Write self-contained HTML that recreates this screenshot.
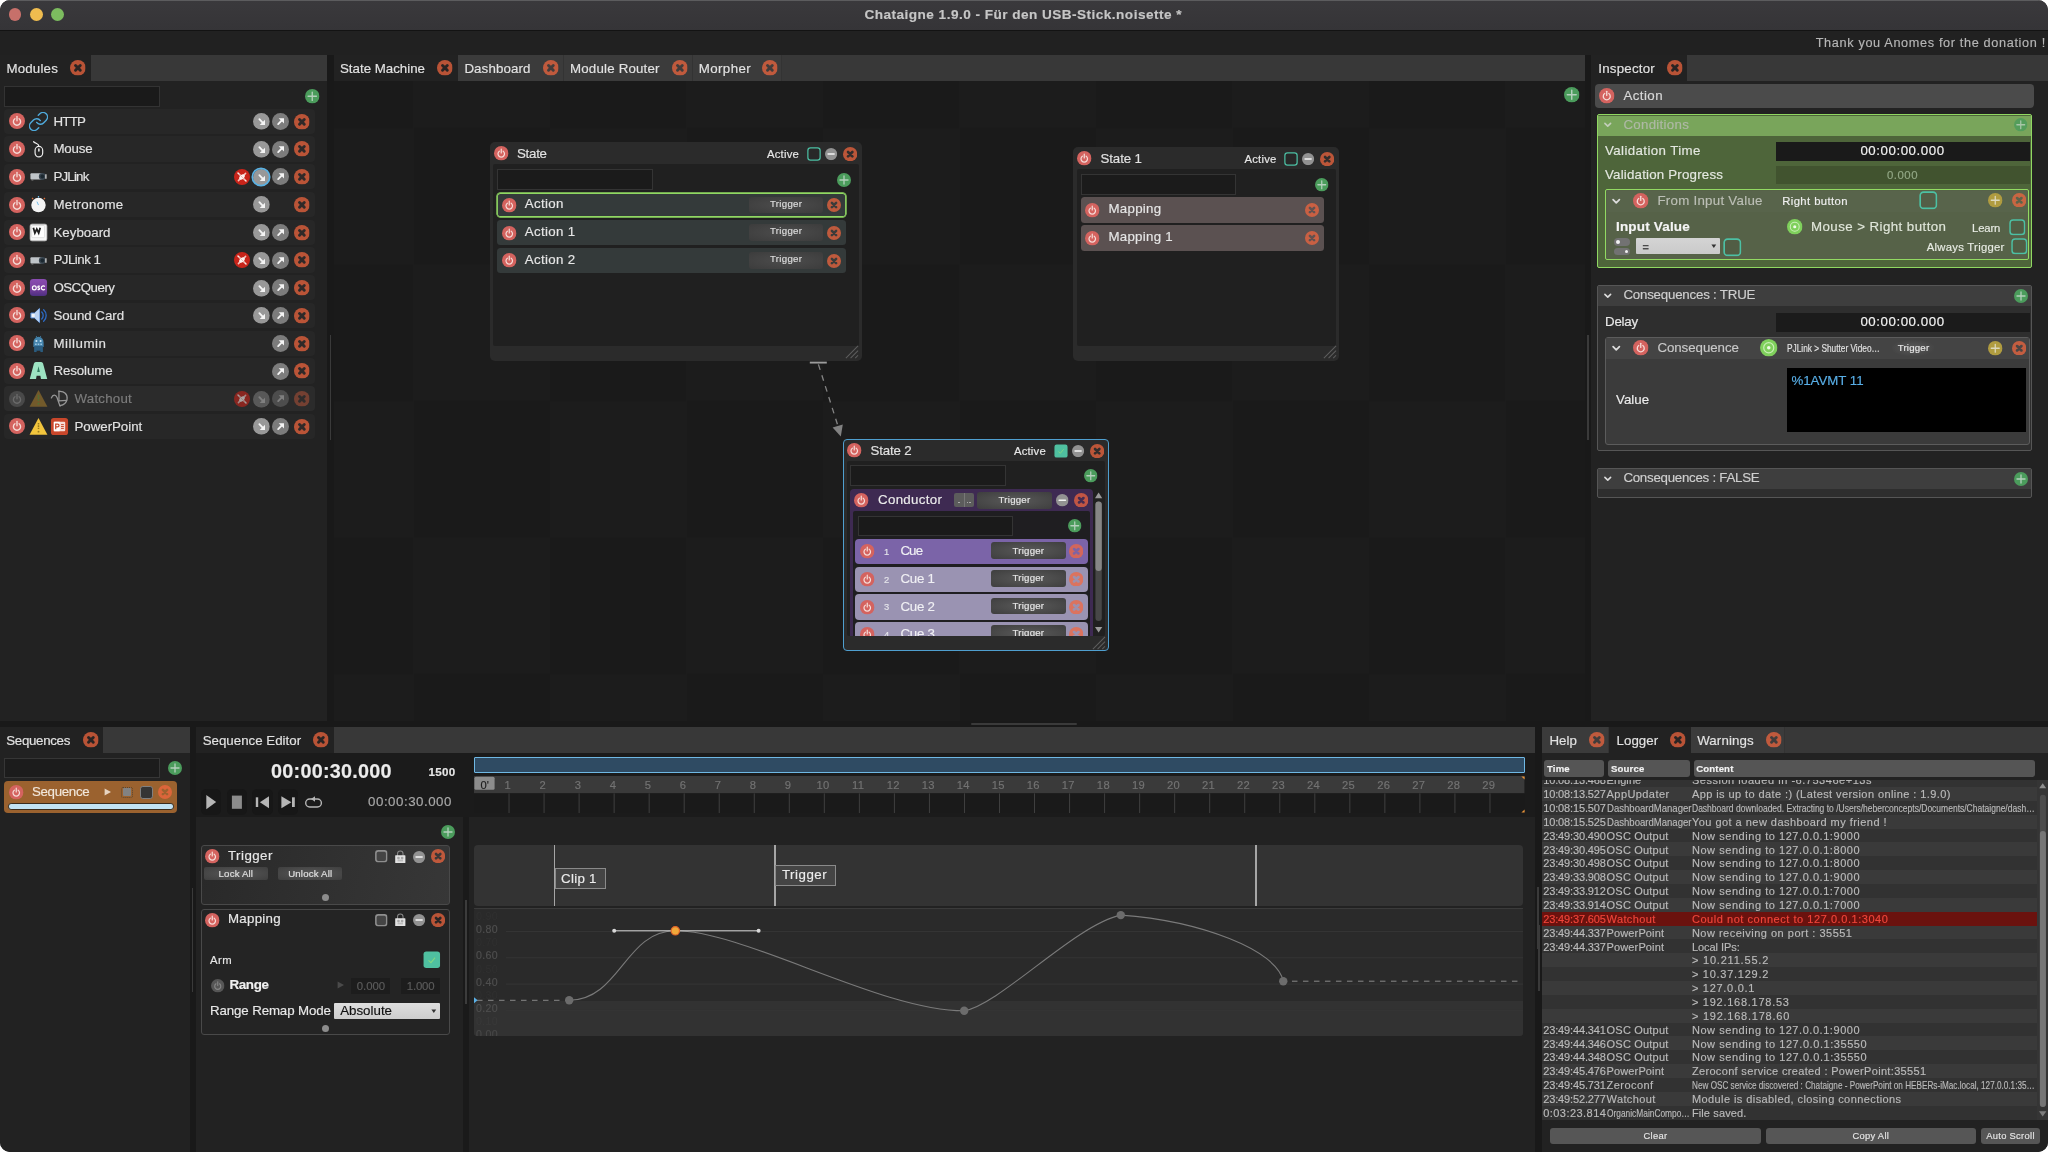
<!DOCTYPE html><html lang="en"><head><meta charset="utf-8"><title>Chataigne 1.9.0</title><style>
html,body{margin:0;padding:0;background:#fff;}
body{width:2048px;height:1152px;overflow:hidden;font-family:"Liberation Sans",sans-serif;}
#root{position:absolute;left:0;top:0;width:2048px;height:1152px;border-radius:10px;overflow:hidden;background:#191919;will-change:transform;}
#root div,#root svg.i{position:absolute;}
.t{white-space:nowrap;-webkit-text-stroke:0.16px;}
svg.i{overflow:visible;}
</style></head><body>
<svg width="0" height="0" style="position:absolute">
<defs>
<mask id="xmask" maskUnits="userSpaceOnUse" x="0" y="0" width="16" height="16">
  <rect x="0" y="0" width="16" height="16" fill="#fff"/>
  <path d="M5.6 5.6 L10.4 10.4 M10.4 5.6 L5.6 10.4" stroke="#000" stroke-opacity=".94" stroke-width="3" stroke-linecap="round"/>
</mask>
<symbol id="pw" viewBox="0 0 16 16">
  <circle cx="8" cy="8" r="8" fill="#d4635f"/>
  <path d="M5.9 5.7 A3.6 3.6 0 1 0 10.1 5.7" fill="none" stroke="#f6dcd8" stroke-width="1.35" stroke-linecap="round"/>
  <path d="M8 3.4 V7.7" stroke="#f6dcd8" stroke-width="1.35" stroke-linecap="round"/>
</symbol>
<symbol id="pwg" viewBox="0 0 16 16">
  <circle cx="8" cy="8" r="8" fill="#565656"/>
  <path d="M5.9 5.7 A3.6 3.6 0 1 0 10.1 5.7" fill="none" stroke="#868686" stroke-width="1.35" stroke-linecap="round"/>
  <path d="M8 3.4 V7.7" stroke="#868686" stroke-width="1.35" stroke-linecap="round"/>
</symbol>
<symbol id="x" viewBox="0 0 16 16">
  <circle cx="8" cy="8" r="8" fill="#f4663e" fill-opacity=".72" mask="url(#xmask)"/>
</symbol>
<symbol id="xl" viewBox="0 0 16 16">
  <circle cx="8" cy="8" r="8" fill="#f4663e" fill-opacity=".72" mask="url(#xmask)"/>
</symbol>
<symbol id="add" viewBox="0 0 16 16">
  <circle cx="8" cy="8" r="8" fill="#4b9c5c"/>
  <path d="M8 3.4 V12.6 M3.4 8 H12.6" stroke="#b4cfbc" stroke-width="1.5" stroke-linecap="round"/>
</symbol>
<symbol id="addy" viewBox="0 0 16 16">
  <circle cx="8" cy="8" r="8" fill="#b09c40"/>
  <path d="M8 3.6 V12.4 M3.6 8 H12.4" stroke="#ddd9bd" stroke-width="1.4" stroke-linecap="round"/>
</symbol>
<symbol id="ain" viewBox="0 0 16 16">
  <circle cx="8" cy="8" r="8" fill="#989898"/>
  <g transform="translate(8.3 8.3) scale(.8) translate(-8 -8)">
  <path d="M5.2 4.9 L9.4 9.3" stroke="#f4f4f4" stroke-width="2.2" stroke-linecap="round"/>
  <path d="M11.9 5.6 V11.9 H5.6 Z" fill="#f4f4f4"/></g>
</symbol>
<symbol id="aout" viewBox="0 0 16 16">
  <circle cx="8" cy="8" r="8" fill="#7c7c7c"/>
  <g transform="translate(8.2 7.9) scale(.8) translate(-8 -8)">
  <path d="M5 11.2 L9.3 6.8" stroke="#f4f4f4" stroke-width="2.2" stroke-linecap="round"/>
  <path d="M5.6 4.2 H11.9 V10.5 Z" fill="#f4f4f4"/></g>
</symbol>
<symbol id="min" viewBox="0 0 16 16">
  <circle cx="8" cy="8" r="8" fill="#929292"/>
  <path d="M4 8 H12" stroke="#f4f4f4" stroke-width="2" stroke-linecap="round"/>
</symbol>
<symbol id="conn" viewBox="0 0 16 16">
  <circle cx="8" cy="8" r="8" fill="#c8241a"/>
  <path d="M4 4 L12 12" stroke="#fbe9e6" stroke-width="1.5" stroke-linecap="round"/>
  <path d="M11.6 4.4 L9.6 6.4 M6.4 9.6 L4.4 11.6" stroke="#f3c4be" stroke-width="1.5" stroke-linecap="round"/>
  <ellipse cx="8" cy="8" rx="3.3" ry="2" transform="rotate(-45 8 8)" fill="#fdf1ef"/>
  <path d="M5.2 5.2 L10.8 10.8" stroke="#e8a39b" stroke-width=".7"/>
</symbol>
<symbol id="tgt" viewBox="0 0 16 16">
  <circle cx="8" cy="8" r="8" fill="#7fd05c"/>
  <circle cx="8" cy="8" r="4.6" fill="none" stroke="#c9eeb6" stroke-width="1.1"/>
  <circle cx="8" cy="8" r="1.6" fill="#eefae6"/>
</symbol>
<symbol id="cb" viewBox="0 0 16 16">
  <rect x="1" y="1" width="14" height="14" rx="3" fill="#000" fill-opacity=".05" stroke="#4cc0a4" stroke-width="1.4"/>
</symbol>
<symbol id="cbw" viewBox="0 0 16 16">
  <rect x="1.1" y="1.1" width="13.8" height="13.8" rx="3" fill="#444" stroke="#8e8e8e" stroke-width="2"/>
</symbol>
<symbol id="cbon" viewBox="0 0 16 16">
  <rect x="0.5" y="0.5" width="15" height="15" rx="2.5" fill="#4fc0a0"/>
  <path d="M5 8.6 L7.2 10.6 L11 6" fill="none" stroke="#8fdc78" stroke-width="1" opacity=".8"/>
</symbol>
<symbol id="lock" viewBox="0 0 16 16">
  <path d="M5 7.6 V5.2 A3 3 0 0 1 11 5.2 V7.6" fill="none" stroke="#8a8a8a" stroke-width="1.1"/>
  <rect x="2.4" y="6.8" width="11.2" height="8.6" rx=".6" fill="#e2e2e2"/>
  <circle cx="6" cy="10" r="1.5" fill="#a8a8a8"/><circle cx="10" cy="10" r="1.5" fill="#a8a8a8"/>
  <rect x="5" y="11.6" width="6" height="2" fill="#bcbcbc"/>
</symbol>
<symbol id="chev" viewBox="0 0 16 16">
  <path d="M3.2 5.6 L8 10.4 L12.8 5.6" fill="none" stroke="#dcdcdc" stroke-width="2.7" stroke-linecap="round" stroke-linejoin="round"/>
</symbol>
<symbol id="grip" viewBox="0 0 16 16">
  <path d="M15 2 L2 15 M15 7 L7 15 M15 12 L12 15" stroke="#5e5e5e" stroke-width="1.1"/>
</symbol>
<!-- module icons (20x20) -->
<symbol id="m-lnk" viewBox="1.5 1.5 21 21">
  <g fill="none" stroke="#4fa9da" stroke-width="1.6" stroke-linecap="round" stroke-linejoin="round">
  <path d="M10 13a5 5 0 0 0 7.54.54l3-3a5 5 0 0 0-7.07-7.07l-1.72 1.71"/>
  <path d="M14 11a5 5 0 0 0-7.54-.54l-3 3a5 5 0 0 0 7.07 7.07l1.71-1.71"/>
  </g>
</symbol>
<symbol id="m-mouse" viewBox="0 0 20 20">
  <g fill="none" stroke="#ececec" stroke-width="1.25" stroke-linecap="round">
  <rect x="6.4" y="6.8" width="8" height="11" rx="4"/>
  <path d="M10.4 6.8 C10.6 3.4 7.4 4.4 4.8 1.8"/>
  <path d="M10.4 9.4 V11.6" stroke-width="1.6"/>
  </g>
</symbol>
<symbol id="m-pj" viewBox="0 0 20 20">
  <rect x="1.5" y="6.6" width="13" height="6.6" rx="1" fill="#bfc4c8"/>
  <rect x="2.6" y="13.2" width="2" height="1" fill="#888"/>
  <circle cx="14" cy="10" r="3.6" fill="#3a4650"/>
  <circle cx="14" cy="10" r="2" fill="#1c2830"/>
  <path d="M17.8 7.6 V12.4" stroke="#eee" stroke-width="1.2"/>
</symbol>
<symbol id="m-metro" viewBox="0 0 20 20">
  <circle cx="10" cy="10.6" r="7.6" fill="#f4f4f4"/>
  <path d="M10 10.6 L8.4 7" stroke="#6ab8e8" stroke-width="1"/>
  <path d="M3.2 3.2 L4.4 4.4 M16.8 3.2 L15.6 4.4" stroke="#e0703a" stroke-width="1.3"/>
  <path d="M10 1 V2.6" stroke="#6ab8e8" stroke-width="1.3"/>
</symbol>
<symbol id="m-kb" viewBox="0 0 20 20">
  <rect x="1.2" y="1.2" width="17.6" height="17.6" rx="2" fill="#f6f6f6" stroke="#c8c8c8" stroke-width=".8"/>
  <rect x="2.8" y="2.6" width="13.6" height="12.8" rx="1.2" fill="#fdfdfd" stroke="#cfcfcf" stroke-width=".6"/>
  <path d="M4.6 5 L6.2 10.6 L8.2 6.4 L10.2 10.6 L11.8 5" fill="none" stroke="#1e1e1e" stroke-width="1.9" stroke-linejoin="miter"/>
</symbol>
<symbol id="m-osc" viewBox="0 0 20 20">
  <linearGradient id="oscg" x1="0" y1="0" x2="0" y2="1"><stop offset="0" stop-color="#8a4cb2"/><stop offset=".55" stop-color="#7a3f9e"/><stop offset="1" stop-color="#4d2f80"/></linearGradient>
  <rect x="1" y="1" width="18" height="18" rx="3.5" fill="url(#oscg)"/>
  <g fill="none" stroke="#fff" stroke-width="1.3">
   <circle cx="5.6" cy="10.4" r="2"/>
   <path d="M11.4 8.8 C9 7.8 8.8 10 10.2 10.4 C11.8 10.9 11.4 12.8 9 12"/>
   <path d="M16.6 9.2 A2 2 0 1 0 16.6 11.6"/>
  </g>
</symbol>
<symbol id="m-snd" viewBox="0 0 20 20">
  <path d="M2 7.4 H6 L11 2.6 V17.4 L6 12.6 H2 Z" fill="#f2f4f8" stroke="#4a86d8" stroke-width="1"/>
  <path d="M6 7.4 L11 2.6 V17.4 L6 12.6 Z" fill="#bcd4f4"/>
  <path d="M13.4 6.4 A5 5 0 0 1 13.4 13.6 M15.4 4 A8 8 0 0 1 15.4 16" fill="none" stroke="#2d6ac4" stroke-width="1.4" stroke-linecap="round"/>
</symbol>
<symbol id="m-mil" viewBox="0 0 20 20">
  <path d="M4.6 9 A5.4 6 0 0 1 15.4 9 V13.6 H4.6 Z" fill="#4484ad"/>
  <path d="M7 3.6 L7.6 1.8 L8.6 3.2 Z M13 3.6 L12.4 1.8 L11.4 3.2 Z" fill="#4484ad"/>
  <rect x="5.4" y="12.6" width="9.2" height="5" fill="#2b5d80"/>
  <rect x="5.4" y="17" width="2.6" height="2" fill="#2b5d80"/><rect x="12" y="17" width="2.6" height="2" fill="#2b5d80"/>
  <circle cx="7.8" cy="7.4" r="1.1" fill="#cfe6f4"/><circle cx="12.2" cy="7.4" r="1.1" fill="#cfe6f4"/>
  <rect x="6.4" y="10" width="1.6" height="1.6" fill="#9fc8e2"/><rect x="9.2" y="10" width="1.6" height="1.6" fill="#9fc8e2"/><rect x="12" y="10" width="1.6" height="1.6" fill="#9fc8e2"/>
</symbol>
<symbol id="m-res" viewBox="0 0 20 20">
  <path d="M0.8 19 L5.2 2.6 Q5.7 1 7.2 1 H12.8 Q14.3 1 14.8 2.6 L19.2 19 H12.6 L12 15.6 H8 L7.4 19 Z" fill="#9de3c2"/>
  <path d="M8.6 11.6 L10 5.6 L11.4 11.6 Z" fill="#2f7a5e"/>
</symbol>
<symbol id="m-wo" viewBox="0 0 20 20">
  <g fill="none" stroke="#bbb" stroke-width="1.3" stroke-linecap="round">
   <path d="M1.4 9.4 C3 5.4 6 5.4 7.4 9 C8.6 12.6 9.6 15.6 10.6 18"/>
   <path d="M9.4 2 V12.4"/>
   <path d="M9.4 2.6 C15 2 18.6 5.6 18 10.6 C17.4 14.6 14 16.8 10.4 17.6"/>
   <path d="M9.4 12.4 L17.6 12"/>
  </g>
</symbol>
<symbol id="m-warn" viewBox="0 0 20 20">
  <path d="M10 1 L19.4 18.6 H0.6 Z" fill="#f2c53d"/>
  <path d="M10 6.4 V12.6" stroke="#9a7d1c" stroke-width="1.6" stroke-dasharray="1.6 .8"/>
  <circle cx="10" cy="15.4" r="1" fill="#9a7d1c"/>
</symbol>
<symbol id="m-warnd" viewBox="0 0 20 20">
  <path d="M10 1 L19.4 18.6 H0.6 Z" fill="#8a6a2c"/>
  <path d="M10 6.4 V12.6" stroke="#5a8a3a" stroke-width="1.6" stroke-dasharray="1.6 .8"/>
  <circle cx="10" cy="15.4" r="1" fill="#5a8a3a"/>
</symbol>
<symbol id="m-ppt" viewBox="0 0 20 20">
  <rect x="1" y="1" width="18" height="18" rx="3" fill="#c9472b"/>
  <rect x="4" y="5" width="12" height="10" rx="1" fill="#f6ddd6"/>
  <rect x="4" y="5" width="6.2" height="10" fill="#fff"/>
  <path d="M6 13 V7.4 H8 A1.5 1.5 0 0 1 8 10.4 H6" fill="none" stroke="#c9472b" stroke-width="1.3"/>
  <path d="M11.6 8 H14.6 M11.6 10 H14.6 M11.6 12 H14.6" stroke="#c9472b" stroke-width="1"/>
</symbol>
</defs>
</svg>
<div id="root"><div style="left:0.00px;top:0.00px;width:2048.00px;height:31.20px;background:linear-gradient(#3a393c,#353437);border-top:1px solid #5c5c5e;border-bottom:1.3px solid #131313;box-sizing:border-box;"></div><div style="left:8.50px;top:8.40px;width:12.80px;height:12.80px;background:#c7706a;border-radius:7px;"></div><div style="left:29.90px;top:8.40px;width:12.80px;height:12.80px;background:#efbc4f;border-radius:7px;"></div><div style="left:51.20px;top:8.40px;width:12.80px;height:12.80px;background:#7cbc5f;border-radius:7px;"></div><div class="t" style="top:5.10px;height:20px;line-height:20px;font-size:13.6px;color:#c6c6c6;font-weight:700;letter-spacing:0.464px;left:723.23px;width:600.00px;text-align:center;">Chataigne 1.9.0 - Für den USB-Stick.noisette *</div><div style="left:0.00px;top:31.20px;width:2048.00px;height:24.00px;background:#212121;"></div><div class="t" style="top:32.50px;height:20px;line-height:20px;font-size:12.7px;color:#b6b6b6;letter-spacing:0.651px;left:1545.85px;width:500.00px;text-align:right;">Thank you Anomes for the donation !</div>
<div style="left:0.00px;top:55.50px;width:327.00px;height:665.00px;background:#222222;"></div><div style="left:0.00px;top:54.90px;width:327.00px;height:26.10px;background:#383838;"></div><div style="left:0.00px;top:54.90px;width:91.00px;height:26.10px;background:#222222;"></div><div class="t" style="top:58.70px;height:20px;line-height:20px;font-size:13.3px;color:#e2e2e2;letter-spacing:0.189px;left:6.40px;">Modules</div><svg class="i" style="left:69.60px;top:59.85px;width:15.8px;height:15.8px;"><use href="#x"/></svg><div style="left:4.00px;top:85.50px;width:155.50px;height:21.00px;background:#1a1a1a;border:1px solid #333;box-sizing:border-box;"></div><svg class="i" style="left:304.95px;top:88.95px;width:14.5px;height:14.5px;"><use href="#add"/></svg><div style="left:4.00px;top:108.70px;width:310.50px;height:25.20px;background:#272727;border-radius:4px;"></div><svg class="i" style="left:9.00px;top:113.30px;width:16px;height:16px;"><use href="#pw"/></svg><svg class="i" style="left:28.50px;top:111.80px;width:19px;height:19px;"><use href="#m-lnk"/></svg><div class="t" style="top:111.70px;height:20px;line-height:20px;font-size:13.3px;color:#e2e2e2;letter-spacing:-0.74px;left:53.40px;">HTTP</div><svg class="i" style="left:252.70px;top:113.10px;width:16.8px;height:16.8px;"><use href="#ain"/></svg><svg class="i" style="left:272.00px;top:113.00px;width:17px;height:17px;"><use href="#aout"/></svg><svg class="i" style="left:294.00px;top:113.70px;width:15.8px;height:15.8px;"><use href="#x"/></svg><div style="left:4.00px;top:136.44px;width:310.50px;height:25.20px;background:#272727;border-radius:4px;"></div><svg class="i" style="left:9.00px;top:141.04px;width:16px;height:16px;"><use href="#pw"/></svg><svg class="i" style="left:28.50px;top:139.54px;width:19px;height:19px;"><use href="#m-mouse"/></svg><div class="t" style="top:139.44px;height:20px;line-height:20px;font-size:13.3px;color:#e2e2e2;letter-spacing:-0.155px;left:53.40px;">Mouse</div><svg class="i" style="left:252.70px;top:140.84px;width:16.8px;height:16.8px;"><use href="#ain"/></svg><svg class="i" style="left:272.00px;top:140.74px;width:17px;height:17px;"><use href="#aout"/></svg><svg class="i" style="left:294.00px;top:141.44px;width:15.8px;height:15.8px;"><use href="#x"/></svg><div style="left:4.00px;top:164.18px;width:310.50px;height:25.20px;background:#272727;border-radius:4px;"></div><svg class="i" style="left:9.00px;top:168.78px;width:16px;height:16px;"><use href="#pw"/></svg><svg class="i" style="left:28.50px;top:167.28px;width:19px;height:19px;"><use href="#m-pj"/></svg><div class="t" style="top:167.18px;height:20px;line-height:20px;font-size:13.3px;color:#e2e2e2;letter-spacing:-0.784px;left:53.40px;">PJLink</div><svg class="i" style="left:233.60px;top:168.78px;width:16px;height:16px;"><use href="#conn"/></svg><svg class="i" style="left:252.70px;top:168.58px;width:16.8px;height:16.8px;"><use href="#ain"/></svg><svg class="i" style="left:272.00px;top:168.48px;width:17px;height:17px;"><use href="#aout"/></svg><svg class="i" style="left:294.00px;top:169.18px;width:15.8px;height:15.8px;"><use href="#x"/></svg><div style="left:4.00px;top:191.92px;width:310.50px;height:25.20px;background:#272727;border-radius:4px;"></div><svg class="i" style="left:9.00px;top:196.52px;width:16px;height:16px;"><use href="#pw"/></svg><svg class="i" style="left:28.50px;top:195.02px;width:19px;height:19px;"><use href="#m-metro"/></svg><div class="t" style="top:194.92px;height:20px;line-height:20px;font-size:13.3px;color:#e2e2e2;letter-spacing:0.317px;left:53.40px;">Metronome</div><svg class="i" style="left:252.70px;top:196.32px;width:16.8px;height:16.8px;"><use href="#ain"/></svg><svg class="i" style="left:294.00px;top:196.92px;width:15.8px;height:15.8px;"><use href="#x"/></svg><div style="left:4.00px;top:219.66px;width:310.50px;height:25.20px;background:#272727;border-radius:4px;"></div><svg class="i" style="left:9.00px;top:224.26px;width:16px;height:16px;"><use href="#pw"/></svg><svg class="i" style="left:28.50px;top:222.76px;width:19px;height:19px;"><use href="#m-kb"/></svg><div class="t" style="top:222.66px;height:20px;line-height:20px;font-size:13.3px;color:#e2e2e2;letter-spacing:0.025px;left:53.40px;">Keyboard</div><svg class="i" style="left:252.70px;top:224.06px;width:16.8px;height:16.8px;"><use href="#ain"/></svg><svg class="i" style="left:272.00px;top:223.96px;width:17px;height:17px;"><use href="#aout"/></svg><svg class="i" style="left:294.00px;top:224.66px;width:15.8px;height:15.8px;"><use href="#x"/></svg><div style="left:4.00px;top:247.40px;width:310.50px;height:25.20px;background:#272727;border-radius:4px;"></div><svg class="i" style="left:9.00px;top:252.00px;width:16px;height:16px;"><use href="#pw"/></svg><svg class="i" style="left:28.50px;top:250.50px;width:19px;height:19px;"><use href="#m-pj"/></svg><div class="t" style="top:250.40px;height:20px;line-height:20px;font-size:13.3px;color:#e2e2e2;letter-spacing:-0.5px;left:53.40px;">PJLink 1</div><svg class="i" style="left:233.60px;top:252.00px;width:16px;height:16px;"><use href="#conn"/></svg><svg class="i" style="left:252.70px;top:251.80px;width:16.8px;height:16.8px;"><use href="#ain"/></svg><svg class="i" style="left:272.00px;top:251.70px;width:17px;height:17px;"><use href="#aout"/></svg><svg class="i" style="left:294.00px;top:252.40px;width:15.8px;height:15.8px;"><use href="#x"/></svg><div style="left:4.00px;top:275.14px;width:310.50px;height:25.20px;background:#272727;border-radius:4px;"></div><svg class="i" style="left:9.00px;top:279.74px;width:16px;height:16px;"><use href="#pw"/></svg><svg class="i" style="left:28.50px;top:278.24px;width:19px;height:19px;"><use href="#m-osc"/></svg><div class="t" style="top:278.14px;height:20px;line-height:20px;font-size:13.3px;color:#e2e2e2;letter-spacing:-0.49px;left:53.40px;">OSCQuery</div><svg class="i" style="left:252.70px;top:279.54px;width:16.8px;height:16.8px;"><use href="#ain"/></svg><svg class="i" style="left:272.00px;top:279.44px;width:17px;height:17px;"><use href="#aout"/></svg><svg class="i" style="left:294.00px;top:280.14px;width:15.8px;height:15.8px;"><use href="#x"/></svg><div style="left:4.00px;top:302.88px;width:310.50px;height:25.20px;background:#272727;border-radius:4px;"></div><svg class="i" style="left:9.00px;top:307.48px;width:16px;height:16px;"><use href="#pw"/></svg><svg class="i" style="left:28.50px;top:305.98px;width:19px;height:19px;"><use href="#m-snd"/></svg><div class="t" style="top:305.88px;height:20px;line-height:20px;font-size:13.3px;color:#e2e2e2;letter-spacing:-0.03px;left:53.40px;">Sound Card</div><svg class="i" style="left:252.70px;top:307.28px;width:16.8px;height:16.8px;"><use href="#ain"/></svg><svg class="i" style="left:272.00px;top:307.18px;width:17px;height:17px;"><use href="#aout"/></svg><svg class="i" style="left:294.00px;top:307.88px;width:15.8px;height:15.8px;"><use href="#x"/></svg><div style="left:4.00px;top:330.62px;width:310.50px;height:25.20px;background:#272727;border-radius:4px;"></div><svg class="i" style="left:9.00px;top:335.22px;width:16px;height:16px;"><use href="#pw"/></svg><svg class="i" style="left:28.50px;top:333.72px;width:19px;height:19px;"><use href="#m-mil"/></svg><div class="t" style="top:333.62px;height:20px;line-height:20px;font-size:13.3px;color:#e2e2e2;letter-spacing:0.533px;left:53.40px;">Millumin</div><svg class="i" style="left:272.00px;top:334.92px;width:17px;height:17px;"><use href="#aout"/></svg><svg class="i" style="left:294.00px;top:335.62px;width:15.8px;height:15.8px;"><use href="#x"/></svg><div style="left:4.00px;top:358.36px;width:310.50px;height:25.20px;background:#272727;border-radius:4px;"></div><svg class="i" style="left:9.00px;top:362.96px;width:16px;height:16px;"><use href="#pw"/></svg><svg class="i" style="left:28.50px;top:361.46px;width:19px;height:19px;"><use href="#m-res"/></svg><div class="t" style="top:361.36px;height:20px;line-height:20px;font-size:13.3px;color:#e2e2e2;letter-spacing:-0.096px;left:53.40px;">Resolume</div><svg class="i" style="left:272.00px;top:362.66px;width:17px;height:17px;"><use href="#aout"/></svg><svg class="i" style="left:294.00px;top:363.36px;width:15.8px;height:15.8px;"><use href="#x"/></svg><div style="left:4.00px;top:386.10px;width:310.50px;height:25.20px;background:#2b2b2b;border-radius:4px;"></div><svg class="i" style="left:9.00px;top:390.70px;width:16px;height:16px;opacity:.7;"><use href="#pwg"/></svg><svg class="i" style="left:28.50px;top:389.20px;width:19px;height:19px;opacity:.75;"><use href="#m-warnd"/></svg><svg class="i" style="left:50.00px;top:389.20px;width:19px;height:19px;opacity:.75;"><use href="#m-wo"/></svg><div class="t" style="top:389.10px;height:20px;line-height:20px;font-size:13.3px;color:#7c7c7c;letter-spacing:0.23px;left:74.50px;">Watchout</div><svg class="i" style="left:233.60px;top:390.70px;width:16px;height:16px;opacity:.6;"><use href="#conn"/></svg><svg class="i" style="left:252.70px;top:390.50px;width:16.8px;height:16.8px;opacity:.42;"><use href="#ain"/></svg><svg class="i" style="left:272.00px;top:390.40px;width:17px;height:17px;opacity:.42;"><use href="#aout"/></svg><svg class="i" style="left:294.00px;top:391.10px;width:15.8px;height:15.8px;opacity:.5;"><use href="#x"/></svg><div style="left:4.00px;top:413.84px;width:310.50px;height:25.20px;background:#272727;border-radius:4px;"></div><svg class="i" style="left:9.00px;top:418.44px;width:16px;height:16px;"><use href="#pw"/></svg><svg class="i" style="left:28.50px;top:416.94px;width:19px;height:19px;"><use href="#m-warn"/></svg><svg class="i" style="left:50.00px;top:416.94px;width:19px;height:19px;"><use href="#m-ppt"/></svg><div class="t" style="top:416.84px;height:20px;line-height:20px;font-size:13.3px;color:#e2e2e2;letter-spacing:-0.033px;left:74.50px;">PowerPoint</div><svg class="i" style="left:252.70px;top:418.24px;width:16.8px;height:16.8px;"><use href="#ain"/></svg><svg class="i" style="left:272.00px;top:418.14px;width:17px;height:17px;"><use href="#aout"/></svg><svg class="i" style="left:294.00px;top:418.84px;width:15.8px;height:15.8px;"><use href="#x"/></svg><svg class="i" style="left:250.30px;top:166.08px;width:22.00px;height:22.00px;" viewBox="0 0 22.00 22.00"><circle cx="11" cy="11" r="8.7" fill="none" stroke="#5ab2e4" stroke-width="1.7"/></svg><div style="left:329.50px;top:335.00px;width:1.50px;height:105.00px;background:#3a3a3a;"></div><div style="left:971.00px;top:723.40px;width:106.00px;height:1.60px;background:#3a3a3a;border-radius:1px;"></div>
<div style="left:333.50px;top:81.00px;width:1251.50px;height:639.50px;background-color:#1a1a1a;background-image:conic-gradient(#1c1c1c 25%,#1a1a1a 0 50%,#1c1c1c 0 75%,#1a1a1a 0);background-size:273px 273px;background-position:488.8px 183.5px;"></div><div style="left:333.50px;top:54.90px;width:1251.50px;height:26.10px;background:#383838;"></div><div style="left:333.50px;top:54.90px;width:124.50px;height:26.10px;background:#222222;"></div><div class="t" style="top:58.70px;height:20px;line-height:20px;font-size:13.3px;color:#e2e2e2;letter-spacing:-0.001px;left:340.00px;">State Machine</div><svg class="i" style="left:437.10px;top:59.85px;width:15.8px;height:15.8px;"><use href="#x"/></svg><div style="left:458.00px;top:54.90px;width:105.50px;height:26.10px;background:#3b3b3b;box-shadow:inset -1px 0 0 #333;"></div><div class="t" style="top:58.70px;height:20px;line-height:20px;font-size:13.3px;color:#e2e2e2;letter-spacing:0.117px;left:464.40px;">Dashboard</div><svg class="i" style="left:542.60px;top:59.85px;width:15.8px;height:15.8px;"><use href="#x"/></svg><div style="left:563.50px;top:54.90px;width:129.00px;height:26.10px;background:#3b3b3b;box-shadow:inset -1px 0 0 #333;"></div><div class="t" style="top:58.70px;height:20px;line-height:20px;font-size:13.3px;color:#e2e2e2;letter-spacing:0.19px;left:570.00px;">Module Router</div><svg class="i" style="left:671.60px;top:59.85px;width:15.8px;height:15.8px;"><use href="#x"/></svg><div style="left:692.50px;top:54.90px;width:89.00px;height:26.10px;background:#3b3b3b;box-shadow:inset -1px 0 0 #333;"></div><div class="t" style="top:58.70px;height:20px;line-height:20px;font-size:13.3px;color:#e2e2e2;letter-spacing:0.414px;left:698.70px;">Morpher</div><svg class="i" style="left:762.10px;top:59.85px;width:15.8px;height:15.8px;"><use href="#x"/></svg><svg class="i" style="left:1564.25px;top:86.75px;width:15.5px;height:15.5px;"><use href="#add"/></svg><div style="left:489.80px;top:142.00px;width:372.20px;height:218.90px;background:#2b2b2b;border-radius:5px;"></div><div style="left:493.20px;top:164.40px;width:365.40px;height:182.00px;background:#202020;border-radius:2px;"></div><svg class="i" style="left:493.75px;top:145.95px;width:14.5px;height:14.5px;"><use href="#pw"/></svg><div class="t" style="top:143.90px;height:20px;line-height:20px;font-size:13.3px;color:#e2e2e2;letter-spacing:-0.266px;left:517.00px;">State</div><div class="t" style="top:144.00px;height:20px;line-height:20px;font-size:11.3px;color:#e8e8e8;letter-spacing:0.207px;left:767.00px;">Active</div><svg class="i" style="left:806.70px;top:146.50px;width:14px;height:14px;"><use href="#cb"/></svg><svg class="i" style="left:824.90px;top:147.60px;width:12.2px;height:12.2px;"><use href="#min"/></svg><svg class="i" style="left:842.80px;top:146.50px;width:14.4px;height:14.4px;"><use href="#x"/></svg><div style="left:497.00px;top:169.00px;width:155.50px;height:20.50px;background:#1b1b1b;border:1px solid #343434;box-sizing:border-box;"></div><svg class="i" style="left:836.90px;top:172.60px;width:14px;height:14px;"><use href="#add"/></svg><div style="left:497.00px;top:192.70px;width:349.20px;height:24.80px;background:#343a3a;border-radius:3.5px;box-shadow:0 0 0 0.7px #90d862,inset 0 0 0 0.9px #90d862;"></div><svg class="i" style="left:501.55px;top:197.85px;width:14.5px;height:14.5px;"><use href="#pw"/></svg><div class="t" style="top:194.20px;height:20px;line-height:20px;font-size:13.3px;color:#e6e6e6;letter-spacing:0.306px;left:524.80px;">Action</div><div style="left:748.70px;top:196.70px;width:74.50px;height:16.80px;background:radial-gradient(ellipse at center,#4d4d4d 0%,#3c3c3c 100%);border-radius:3px;"></div><div class="t" style="top:193.80px;height:20px;line-height:20px;font-size:9.7px;color:#dedede;letter-spacing:0.295px;left:749.15px;width:74.00px;text-align:center;">Trigger</div><svg class="i" style="left:827.00px;top:198.30px;width:14px;height:14px;"><use href="#xl"/></svg><div style="left:497.00px;top:220.35px;width:349.20px;height:24.80px;background:#343a3a;border-radius:3.5px;"></div><svg class="i" style="left:501.55px;top:225.50px;width:14.5px;height:14.5px;"><use href="#pw"/></svg><div class="t" style="top:221.85px;height:20px;line-height:20px;font-size:13.3px;color:#e6e6e6;letter-spacing:0.336px;left:524.80px;">Action 1</div><div style="left:748.70px;top:224.35px;width:74.50px;height:16.80px;background:radial-gradient(ellipse at center,#4d4d4d 0%,#3c3c3c 100%);border-radius:3px;"></div><div class="t" style="top:221.45px;height:20px;line-height:20px;font-size:9.7px;color:#dedede;letter-spacing:0.295px;left:749.15px;width:74.00px;text-align:center;">Trigger</div><svg class="i" style="left:827.00px;top:225.95px;width:14px;height:14px;"><use href="#xl"/></svg><div style="left:497.00px;top:248.00px;width:349.20px;height:24.80px;background:#343a3a;border-radius:3.5px;"></div><svg class="i" style="left:501.55px;top:253.15px;width:14.5px;height:14.5px;"><use href="#pw"/></svg><div class="t" style="top:249.50px;height:20px;line-height:20px;font-size:13.3px;color:#e6e6e6;letter-spacing:0.336px;left:524.80px;">Action 2</div><div style="left:748.70px;top:252.00px;width:74.50px;height:16.80px;background:radial-gradient(ellipse at center,#4d4d4d 0%,#3c3c3c 100%);border-radius:3px;"></div><div class="t" style="top:249.10px;height:20px;line-height:20px;font-size:9.7px;color:#dedede;letter-spacing:0.295px;left:749.15px;width:74.00px;text-align:center;">Trigger</div><svg class="i" style="left:827.00px;top:253.60px;width:14px;height:14px;"><use href="#xl"/></svg><svg class="i" style="left:844.10px;top:343.80px;width:15px;height:15px;"><use href="#grip"/></svg><div style="left:1073.30px;top:147.00px;width:266.20px;height:213.80px;background:#2b2b2b;border-radius:5px;"></div><div style="left:1076.70px;top:169.40px;width:259.40px;height:177.00px;background:#202020;border-radius:2px;"></div><svg class="i" style="left:1077.25px;top:150.95px;width:14.5px;height:14.5px;"><use href="#pw"/></svg><div class="t" style="top:148.90px;height:20px;line-height:20px;font-size:13.3px;color:#e2e2e2;letter-spacing:-0.107px;left:1100.50px;">State 1</div><div class="t" style="top:149.00px;height:20px;line-height:20px;font-size:11.3px;color:#e8e8e8;letter-spacing:0.207px;left:1244.50px;">Active</div><svg class="i" style="left:1284.20px;top:151.50px;width:14px;height:14px;"><use href="#cb"/></svg><svg class="i" style="left:1302.40px;top:152.60px;width:12.2px;height:12.2px;"><use href="#min"/></svg><svg class="i" style="left:1320.30px;top:151.50px;width:14.4px;height:14.4px;"><use href="#x"/></svg><div style="left:1080.60px;top:174.20px;width:155.50px;height:20.50px;background:#1b1b1b;border:1px solid #343434;box-sizing:border-box;"></div><svg class="i" style="left:1314.65px;top:178.25px;width:13.5px;height:13.5px;"><use href="#add"/></svg><div style="left:1080.60px;top:197.40px;width:243.20px;height:25.30px;background:#5b5151;border-radius:3.5px;"></div><svg class="i" style="left:1085.15px;top:202.80px;width:14.5px;height:14.5px;"><use href="#pw"/></svg><div class="t" style="top:199.15px;height:20px;line-height:20px;font-size:13.3px;color:#e6e6e6;letter-spacing:0.297px;left:1108.40px;">Mapping</div><svg class="i" style="left:1304.60px;top:203.25px;width:14px;height:14px;"><use href="#xl"/></svg><div style="left:1080.60px;top:225.40px;width:243.20px;height:25.30px;background:#5b5151;border-radius:3.5px;"></div><svg class="i" style="left:1085.15px;top:230.80px;width:14.5px;height:14.5px;"><use href="#pw"/></svg><div class="t" style="top:227.15px;height:20px;line-height:20px;font-size:13.3px;color:#e6e6e6;letter-spacing:0.274px;left:1108.40px;">Mapping 1</div><svg class="i" style="left:1304.60px;top:231.25px;width:14px;height:14px;"><use href="#xl"/></svg><svg class="i" style="left:1321.60px;top:343.70px;width:15px;height:15px;"><use href="#grip"/></svg><svg class="i" style="left:800.00px;top:355.00px;width:60.00px;height:90.00px;" viewBox="0 0 60.00 90.00"><path d="M9.8 7.6 H26.8" stroke="#9c9c9c" stroke-width="1.9"/><path d="M18.4 9.4 L38.6 73" stroke="#848484" stroke-width="1.3" stroke-dasharray="5.8 5.6"/><path d="M32.6 72.4 L42.8 69.4 L40.8 81.6 Z" fill="#828282"/></svg>
<div style="left:843.40px;top:439.40px;width:265.50px;height:212.00px;background:#2b2b2b;border-radius:4px;border:1.6px solid #4f9fcf;box-sizing:border-box;"></div><div style="left:846.80px;top:460.80px;width:258.70px;height:175.60px;background:#202020;border-radius:2px;"></div><svg class="i" style="left:847.35px;top:442.95px;width:14.5px;height:14.5px;"><use href="#pw"/></svg><div class="t" style="top:440.90px;height:20px;line-height:20px;font-size:13.3px;color:#e2e2e2;letter-spacing:-0.19px;left:870.60px;">State 2</div><div class="t" style="top:441.00px;height:20px;line-height:20px;font-size:11.3px;color:#e8e8e8;letter-spacing:0.207px;left:1013.90px;">Active</div><svg class="i" style="left:1053.60px;top:443.50px;width:14px;height:14px;"><use href="#cbon"/></svg><svg class="i" style="left:1071.80px;top:444.60px;width:12.2px;height:12.2px;"><use href="#min"/></svg><svg class="i" style="left:1089.70px;top:443.50px;width:14.4px;height:14.4px;"><use href="#x"/></svg><div style="left:850.20px;top:465.40px;width:155.50px;height:20.50px;background:#1b1b1b;border:1px solid #343434;box-sizing:border-box;"></div><svg class="i" style="left:1084.45px;top:469.05px;width:13.5px;height:13.5px;"><use href="#add"/></svg><div style="left:850.20px;top:489.00px;width:242.60px;height:147.20px;overflow:hidden;"><div style="left:0.00px;top:0.00px;width:242.60px;height:170.00px;background:#3e2a52;border-radius:4px;"></div><div style="left:3.00px;top:21.60px;width:236.60px;height:150.00px;background:#1f1e21;border-radius:2px;"></div><svg class="i" style="left:4.25px;top:3.95px;width:14.5px;height:14.5px;"><use href="#pw"/></svg><div class="t" style="top:1.00px;height:20px;line-height:20px;font-size:13.3px;color:#ececec;letter-spacing:0.33px;left:27.80px;">Conductor</div><div style="left:103.80px;top:4.20px;width:20.00px;height:14.00px;background:#5c5c5c;border-radius:2px;"></div><div style="left:113.40px;top:4.20px;width:0.90px;height:14.00px;background:#777;"></div><div style="left:108.30px;top:13.20px;width:1.20px;height:1.20px;background:#aaa;"></div><div style="left:116.80px;top:13.20px;width:1.20px;height:1.20px;background:#aaa;"></div><div style="left:119.30px;top:13.20px;width:1.20px;height:1.20px;background:#aaa;"></div><div style="left:126.80px;top:3.20px;width:74.80px;height:16.40px;background:radial-gradient(ellipse at center,#5a5a5a 0%,#3e3e3e 100%);border-radius:3px;"></div><div class="t" style="top:1.10px;height:20px;line-height:20px;font-size:9.7px;color:#e6e6e6;letter-spacing:0.212px;left:126.91px;width:74.80px;text-align:center;">Trigger</div><svg class="i" style="left:205.95px;top:4.95px;width:12.5px;height:12.5px;"><use href="#min"/></svg><svg class="i" style="left:224.15px;top:3.95px;width:14.5px;height:14.5px;"><use href="#xl"/></svg><div style="left:7.40px;top:26.60px;width:155.50px;height:20.60px;background:#1a1a1a;border:1px solid #343434;box-sizing:border-box;"></div><svg class="i" style="left:218.05px;top:30.25px;width:13.5px;height:13.5px;"><use href="#add"/></svg><div style="left:5.30px;top:50.00px;width:232.80px;height:25.40px;background:#7b64a8;border-radius:4px;"></div><svg class="i" style="left:9.55px;top:55.35px;width:14.5px;height:14.5px;"><use href="#pw"/></svg><div class="t" style="top:53.00px;height:20px;line-height:20px;font-size:9.4px;color:#e4e4ea;left:33.80px;">1</div><div class="t" style="top:52.40px;height:20px;line-height:20px;font-size:13.3px;color:#f0f0f4;letter-spacing:-0.853px;left:50.20px;">Cue</div><div style="left:140.80px;top:53.40px;width:74.60px;height:16.80px;background:radial-gradient(ellipse at center,#5a5a5a 0%,#3e3e3e 100%);border-radius:3px;"></div><div class="t" style="top:51.50px;height:20px;line-height:20px;font-size:9.7px;color:#e6e6e6;letter-spacing:0.212px;left:140.91px;width:74.60px;text-align:center;">Trigger</div><svg class="i" style="left:218.55px;top:55.35px;width:14.5px;height:14.5px;"><use href="#xl"/></svg><div style="left:5.30px;top:77.65px;width:232.80px;height:25.40px;background:#9a93b2;border-radius:4px;"></div><svg class="i" style="left:9.55px;top:83.00px;width:14.5px;height:14.5px;"><use href="#pw"/></svg><div class="t" style="top:80.65px;height:20px;line-height:20px;font-size:9.4px;color:#e4e4ea;left:33.80px;">2</div><div class="t" style="top:80.05px;height:20px;line-height:20px;font-size:13.3px;color:#f0f0f4;letter-spacing:-0.246px;left:50.20px;">Cue 1</div><div style="left:140.80px;top:81.05px;width:74.60px;height:16.80px;background:radial-gradient(ellipse at center,#5a5a5a 0%,#3e3e3e 100%);border-radius:3px;"></div><div class="t" style="top:79.15px;height:20px;line-height:20px;font-size:9.7px;color:#e6e6e6;letter-spacing:0.212px;left:140.91px;width:74.60px;text-align:center;">Trigger</div><svg class="i" style="left:218.55px;top:83.00px;width:14.5px;height:14.5px;"><use href="#xl"/></svg><div style="left:5.30px;top:105.30px;width:232.80px;height:25.40px;background:#9a93b2;border-radius:4px;"></div><svg class="i" style="left:9.55px;top:110.65px;width:14.5px;height:14.5px;"><use href="#pw"/></svg><div class="t" style="top:108.30px;height:20px;line-height:20px;font-size:9.4px;color:#e4e4ea;left:33.80px;">3</div><div class="t" style="top:107.70px;height:20px;line-height:20px;font-size:13.3px;color:#f0f0f4;letter-spacing:-0.246px;left:50.20px;">Cue 2</div><div style="left:140.80px;top:108.70px;width:74.60px;height:16.80px;background:radial-gradient(ellipse at center,#5a5a5a 0%,#3e3e3e 100%);border-radius:3px;"></div><div class="t" style="top:106.80px;height:20px;line-height:20px;font-size:9.7px;color:#e6e6e6;letter-spacing:0.212px;left:140.91px;width:74.60px;text-align:center;">Trigger</div><svg class="i" style="left:218.55px;top:110.65px;width:14.5px;height:14.5px;"><use href="#xl"/></svg><div style="left:5.30px;top:132.95px;width:232.80px;height:25.40px;background:#9a93b2;border-radius:4px;"></div><svg class="i" style="left:9.55px;top:138.30px;width:14.5px;height:14.5px;"><use href="#pw"/></svg><div class="t" style="top:135.95px;height:20px;line-height:20px;font-size:9.4px;color:#e4e4ea;left:33.80px;">4</div><div class="t" style="top:135.35px;height:20px;line-height:20px;font-size:13.3px;color:#f0f0f4;letter-spacing:-0.246px;left:50.20px;">Cue 3</div><div style="left:140.80px;top:136.35px;width:74.60px;height:16.80px;background:radial-gradient(ellipse at center,#5a5a5a 0%,#3e3e3e 100%);border-radius:3px;"></div><div class="t" style="top:134.45px;height:20px;line-height:20px;font-size:9.7px;color:#e6e6e6;letter-spacing:0.212px;left:140.91px;width:74.60px;text-align:center;">Trigger</div><svg class="i" style="left:218.55px;top:138.30px;width:14.5px;height:14.5px;"><use href="#xl"/></svg></div><svg class="i" style="left:1094.00px;top:490.00px;width:10.00px;height:146.00px;" viewBox="0 0 10.00 146.00"><path d="M1 8.2 L4.6 2.6 L8.2 8.2 Z" fill="#9a9a9a"/><rect x="1.4" y="11.5" width="6.4" height="119.4" rx="3.2" fill="#474747"/><rect x="1.4" y="11.5" width="6.4" height="69.5" rx="3.2" fill="#868686"/><path d="M1 137 L8.3 137 L4.6 142.5 Z" fill="#9a9a9a"/></svg><svg class="i" style="left:1091.40px;top:634.50px;width:15px;height:15px;"><use href="#grip"/></svg>
<div style="left:1591.40px;top:55.50px;width:456.60px;height:665.00px;background:#222222;"></div><div style="left:1591.40px;top:54.90px;width:456.60px;height:26.10px;background:#383838;"></div><div style="left:1591.40px;top:54.90px;width:96.10px;height:26.10px;background:#222222;"></div><div class="t" style="top:58.70px;height:20px;line-height:20px;font-size:13.3px;color:#e2e2e2;letter-spacing:0.212px;left:1598.30px;">Inspector</div><svg class="i" style="left:1666.70px;top:59.85px;width:15.8px;height:15.8px;"><use href="#x"/></svg><div style="left:1587.30px;top:335.00px;width:1.50px;height:105.00px;background:#3a3a3a;"></div><div style="left:1594.80px;top:84.30px;width:439.40px;height:23.40px;background:#4b4b4b;border-radius:4px;"></div><svg class="i" style="left:1598.65px;top:88.05px;width:15.5px;height:15.5px;"><use href="#pw"/></svg><div class="t" style="top:85.60px;height:20px;line-height:20px;font-size:13.3px;color:#d8d8d8;letter-spacing:0.45px;left:1623.40px;">Action</div><div style="left:1596.70px;top:114.40px;width:435.50px;height:153.20px;background:#4e653a;border-radius:2px;border:1.6px solid #90d862;box-sizing:border-box;"></div><div style="left:1598.30px;top:116.00px;width:432.30px;height:19.80px;background:#79a55b;"></div><svg class="i" style="left:1602.65px;top:120.25px;width:9.5px;height:9.5px;opacity:.75;"><use href="#chev"/></svg><div class="t" style="top:114.60px;height:20px;line-height:20px;font-size:13.3px;color:#afb9a6;letter-spacing:0.284px;left:1623.40px;">Conditions</div><svg class="i" style="left:2014.25px;top:118.45px;width:13.5px;height:13.5px;opacity:.8;"><use href="#add"/></svg><div class="t" style="top:141.30px;height:20px;line-height:20px;font-size:13.3px;color:#e4e8e0;letter-spacing:0.397px;left:1605.00px;">Validation Time</div><div style="left:1776.00px;top:141.90px;width:254.00px;height:19.00px;background:#1a1a1a;"></div><div class="t" style="top:141.30px;height:20px;line-height:20px;font-size:13.3px;color:#f2f2f2;letter-spacing:0.55px;left:1775.50px;width:254.00px;text-align:center;">00:00:00.000</div><div class="t" style="top:164.60px;height:20px;line-height:20px;font-size:13.3px;color:#e4e8e0;letter-spacing:0.198px;left:1605.00px;">Validation Progress</div><div style="left:1776.00px;top:166.00px;width:254.00px;height:18.40px;background:#41532f;"></div><div class="t" style="top:165.20px;height:20px;line-height:20px;font-size:11.4px;color:#93a886;letter-spacing:0.5px;left:1775.50px;width:254.00px;text-align:center;">0.000</div><div style="left:1605.00px;top:189.00px;width:424.20px;height:71.40px;background:#566248;border-radius:2px;border:1.6px solid #92da62;box-sizing:border-box;"></div><div style="left:1606.60px;top:190.60px;width:421.00px;height:21.60px;background:#58644b;"></div><svg class="i" style="left:1611.35px;top:195.55px;width:10.5px;height:10.5px;"><use href="#chev"/></svg><svg class="i" style="left:1632.75px;top:193.05px;width:15.5px;height:15.5px;"><use href="#pw"/></svg><div class="t" style="top:191.00px;height:20px;line-height:20px;font-size:13.3px;color:#bcbfb6;letter-spacing:0.272px;left:1657.40px;">From Input Value</div><div class="t" style="top:191.00px;height:20px;line-height:20px;font-size:11.3px;color:#f0f0f0;letter-spacing:0.407px;left:1782.20px;">Right button</div><svg class="i" style="left:1919.10px;top:191.10px;width:18.6px;height:18.6px;"><use href="#cb"/></svg><svg class="i" style="left:1988.25px;top:193.35px;width:14.5px;height:14.5px;"><use href="#addy"/></svg><svg class="i" style="left:2011.75px;top:193.35px;width:14.5px;height:14.5px;"><use href="#xl"/></svg><div class="t" style="top:216.80px;height:20px;line-height:20px;font-size:13.5px;color:#f4f4f4;font-weight:700;letter-spacing:0.178px;left:1616.00px;">Input Value</div><svg class="i" style="left:1787.45px;top:219.25px;width:15.5px;height:15.5px;"><use href="#tgt"/></svg><div class="t" style="top:216.80px;height:20px;line-height:20px;font-size:13.3px;color:#e0e6da;letter-spacing:0.433px;left:1811.00px;">Mouse &gt; Right button</div><div class="t" style="top:217.60px;height:20px;line-height:20px;font-size:11.3px;color:#e8ece4;letter-spacing:-0.151px;left:1972.00px;">Learn</div><svg class="i" style="left:2008.70px;top:218.70px;width:16.6px;height:16.6px;"><use href="#cb"/></svg><div style="left:1614.00px;top:238.40px;width:16.40px;height:7.60px;background:#727272;border-radius:4px;"></div><div style="left:1616.00px;top:240.40px;width:3.60px;height:3.60px;background:#f2f2f2;border-radius:2px;"></div><div style="left:1614.00px;top:247.60px;width:16.40px;height:7.60px;background:#727272;border-radius:4px;"></div><div style="left:1624.60px;top:249.60px;width:3.60px;height:3.60px;background:#f2f2f2;border-radius:2px;"></div><div style="left:1635.60px;top:238.20px;width:84.40px;height:16.00px;background:linear-gradient(#d4d4d4,#cacaca);border-radius:1px;"></div><div class="t" style="top:236.60px;height:20px;line-height:20px;font-size:11px;color:#4a4a4a;font-weight:700;left:1642.40px;">=</div><svg class="i" style="left:1710.60px;top:244.00px;width:6.00px;height:5.00px;" viewBox="0 0 6.00 5.00"><path d="M0.4 0.6 H5.2 L2.8 4 Z" fill="#333"/></svg><svg class="i" style="left:1722.90px;top:237.90px;width:18.6px;height:18.6px;"><use href="#cb"/></svg><div class="t" style="top:236.80px;height:20px;line-height:20px;font-size:11.3px;color:#e8ece4;letter-spacing:0.277px;left:1864.68px;width:140.00px;text-align:right;">Always Trigger</div><svg class="i" style="left:2010.70px;top:238.10px;width:16.6px;height:16.6px;"><use href="#cb"/></svg><div style="left:1597.40px;top:285.20px;width:434.60px;height:165.60px;background:#2e2e2e;border-radius:2px;border:1.2px solid #565656;box-sizing:border-box;"></div><div style="left:1598.40px;top:286.20px;width:432.60px;height:20.00px;background:#3e3e3e;"></div><svg class="i" style="left:1602.65px;top:290.85px;width:9.5px;height:9.5px;"><use href="#chev"/></svg><div class="t" style="top:285.20px;height:20px;line-height:20px;font-size:13.3px;color:#cfcfcf;letter-spacing:-0.208px;left:1623.40px;">Consequences : TRUE</div><svg class="i" style="left:2014.00px;top:288.60px;width:14px;height:14px;"><use href="#add"/></svg><div class="t" style="top:311.80px;height:20px;line-height:20px;font-size:13.3px;color:#e8e8e8;letter-spacing:-0.225px;left:1605.00px;">Delay</div><div style="left:1776.00px;top:312.60px;width:254.00px;height:19.40px;background:#1b1b1b;"></div><div class="t" style="top:311.80px;height:20px;line-height:20px;font-size:13.3px;color:#f2f2f2;letter-spacing:0.55px;left:1775.50px;width:254.00px;text-align:center;">00:00:00.000</div><div style="left:1605.40px;top:336.60px;width:424.60px;height:108.00px;background:#3b3b3b;border-radius:3px;border:1.2px solid #5c5c5c;box-sizing:border-box;"></div><div style="left:1606.40px;top:337.60px;width:422.60px;height:21.40px;background:#444;"></div><svg class="i" style="left:1611.35px;top:342.75px;width:10.5px;height:10.5px;"><use href="#chev"/></svg><svg class="i" style="left:1632.65px;top:340.05px;width:15.5px;height:15.5px;"><use href="#pw"/></svg><div class="t" style="top:337.60px;height:20px;line-height:20px;font-size:13.3px;color:#c8c8c8;letter-spacing:-0.056px;left:1657.40px;">Consequence</div><svg class="i" style="left:1759.65px;top:339.05px;width:17.5px;height:17.5px;"><use href="#tgt"/></svg><div class="t" style="top:338.00px;height:20px;line-height:20px;font-size:11.3px;color:#e2e2e2;left:1787.40px;transform:scaleX(.735);transform-origin:0 50%;">PJLink &gt; Shutter Video…</div><div style="left:1892.00px;top:339.60px;width:42.00px;height:16.40px;background:radial-gradient(ellipse at center,#5a5a5a 0%,#444 75%);border-radius:3px;"></div><div class="t" style="top:337.60px;height:20px;line-height:20px;font-size:9.7px;color:#e8e8e8;letter-spacing:0.195px;left:1883.50px;width:60.00px;text-align:center;">Trigger</div><svg class="i" style="left:1988.15px;top:340.55px;width:14.5px;height:14.5px;"><use href="#addy"/></svg><svg class="i" style="left:2011.75px;top:340.55px;width:14.5px;height:14.5px;"><use href="#xl"/></svg><div class="t" style="top:389.60px;height:20px;line-height:20px;font-size:13.3px;color:#ececec;letter-spacing:0.017px;left:1616.00px;">Value</div><div style="left:1786.80px;top:367.80px;width:238.80px;height:64.00px;background:#000;"></div><div class="t" style="top:371.10px;height:20px;line-height:20px;font-size:13.3px;color:#58aee6;letter-spacing:-0.03px;left:1791.40px;">%1AVMT 11</div><div style="left:1597.40px;top:468.40px;width:434.60px;height:29.20px;background:#2e2e2e;border-radius:2px;border:1.2px solid #565656;box-sizing:border-box;"></div><div style="left:1598.40px;top:469.40px;width:432.60px;height:20.00px;background:#3e3e3e;"></div><svg class="i" style="left:1602.65px;top:474.05px;width:9.5px;height:9.5px;"><use href="#chev"/></svg><div class="t" style="top:468.40px;height:20px;line-height:20px;font-size:13.3px;color:#cfcfcf;letter-spacing:-0.257px;left:1623.40px;">Consequences : FALSE</div><svg class="i" style="left:2014.00px;top:471.80px;width:14px;height:14px;"><use href="#add"/></svg>
<div style="left:0.00px;top:727.30px;width:190.00px;height:424.70px;background:#222222;"></div><div style="left:0.00px;top:727.30px;width:190.00px;height:25.50px;background:#383838;"></div><div style="left:0.00px;top:727.30px;width:103.20px;height:25.50px;background:#222222;"></div><div class="t" style="top:730.50px;height:20px;line-height:20px;font-size:13.3px;color:#e2e2e2;letter-spacing:-0.318px;left:6.30px;">Sequences</div><svg class="i" style="left:82.50px;top:731.95px;width:15.8px;height:15.8px;"><use href="#x"/></svg><div style="left:4.20px;top:757.60px;width:155.80px;height:20.80px;background:#1c1c1c;border:1px solid #363636;box-sizing:border-box;"></div><svg class="i" style="left:167.80px;top:761.40px;width:14px;height:14px;"><use href="#add"/></svg><div style="left:4.20px;top:780.60px;width:172.80px;height:32.40px;background:#9b622f;border-radius:4px;"></div><svg class="i" style="left:8.75px;top:785.05px;width:14.5px;height:14.5px;"><use href="#pw"/></svg><div class="t" style="top:782.00px;height:20px;line-height:20px;font-size:13.3px;color:#f1e6da;letter-spacing:-0.327px;left:32.00px;">Sequence</div><svg class="i" style="left:104.00px;top:788.20px;width:8.00px;height:8.00px;" viewBox="0 0 8.00 8.00"><path d="M0.6 0.6 L7 4 L0.6 7.4 Z" fill="#e8d4c0"/></svg><div style="left:121.40px;top:786.80px;width:11.20px;height:11.20px;border-radius:2px;border:1px dotted #5a4630;box-sizing:border-box;"></div><div style="left:123.00px;top:788.40px;width:8.00px;height:8.00px;background:#828282;border-radius:1px;"></div><div style="left:139.90px;top:786.20px;width:12.70px;height:12.70px;background:#353535;border-radius:2.8px;border:1.5px solid #808080;box-sizing:border-box;"></div><svg class="i" style="left:158.00px;top:785.30px;width:14px;height:14px;"><use href="#xl"/></svg><div style="left:7.60px;top:803.40px;width:166.00px;height:6.20px;background:#c2e2f3;border-radius:3.1px;border:1px solid #3b2c1c;box-sizing:border-box;"></div><div style="left:191.80px;top:888.00px;width:1.40px;height:104.00px;background:#3a3a3a;"></div><div style="left:196.20px;top:727.30px;width:1338.80px;height:424.70px;background:#222222;"></div><div style="left:196.20px;top:727.30px;width:1338.80px;height:25.50px;background:#383838;"></div><div style="left:196.20px;top:727.30px;width:137.80px;height:25.50px;background:#222222;"></div><div class="t" style="top:730.50px;height:20px;line-height:20px;font-size:13.3px;color:#e2e2e2;letter-spacing:0.005px;left:202.70px;">Sequence Editor</div><svg class="i" style="left:312.90px;top:731.95px;width:15.8px;height:15.8px;"><use href="#x"/></svg><div style="left:196.20px;top:752.80px;width:267.20px;height:64.00px;background:#1b1b1b;"></div><div style="left:463.40px;top:752.80px;width:5.80px;height:399.20px;background:#1a1a1a;"></div><div style="left:463.40px;top:752.80px;width:1071.60px;height:64.00px;background:#1b1b1b;"></div><div class="t" style="top:757.90px;height:26px;line-height:26px;font-size:19.8px;color:#ececec;font-weight:700;letter-spacing:0.25px;left:231.40px;width:200.00px;text-align:center;">00:00:30.000</div><div class="t" style="top:761.60px;height:20px;line-height:20px;font-size:11.6px;color:#e6e6e6;font-weight:700;letter-spacing:0.3px;left:395.40px;width:60.00px;text-align:right;">1500</div><div style="left:201.10px;top:789.20px;width:20.40px;height:25.60px;background:#171717;border-radius:5px;"></div><div style="left:226.60px;top:789.20px;width:20.40px;height:25.60px;background:#171717;border-radius:5px;"></div><div style="left:252.20px;top:789.20px;width:20.40px;height:25.60px;background:#171717;border-radius:5px;"></div><div style="left:277.80px;top:789.20px;width:20.40px;height:25.60px;background:#171717;border-radius:5px;"></div><svg class="i" style="left:200.00px;top:790.00px;width:130.00px;height:24.00px;" viewBox="0 0 130.00 24.00"><g fill="#b6b6b6"><path d="M6.3 4.9 L16.2 12.1 L6.3 19.3 Z"/><rect x="31.9" y="5.6" width="10" height="13.2" fill="#8c8c8c"/><rect x="55.8" y="7.3" width="2.4" height="9.7"/><path d="M69 6.3 V18.2 L59.9 12.2 Z"/><path d="M81.4 6.3 L91.4 12.2 L81.4 18.2 Z"/><rect x="92" y="7.3" width="2.8" height="9.7"/><path d="M115 6.2 L111 9 L115 11.8 Z"/></g><rect x="105.7" y="9" width="15.7" height="8" rx="4" fill="none" stroke="#b6b6b6" stroke-width="1.4"/></svg><div class="t" style="top:791.80px;height:20px;line-height:20px;font-size:13.3px;color:#a8a8a8;letter-spacing:0.514px;left:311.91px;width:140.00px;text-align:right;">00:00:30.000</div><svg class="i" style="left:440.90px;top:825.00px;width:14px;height:14px;"><use href="#add"/></svg><div style="left:200.90px;top:845.20px;width:249.30px;height:60.20px;background:linear-gradient(105deg,#292929 0%,#373737 100%);border-radius:3px;border:1.1px solid #494949;box-sizing:border-box;"></div><svg class="i" style="left:205.05px;top:849.15px;width:14.5px;height:14.5px;"><use href="#pw"/></svg><div class="t" style="top:846.00px;height:20px;line-height:20px;font-size:13.3px;color:#e8e8e8;letter-spacing:0.462px;left:228.00px;">Trigger</div><svg class="i" style="left:374.50px;top:850.20px;width:12.6px;height:12.6px;"><use href="#cbw"/></svg><svg class="i" style="left:392.70px;top:848.70px;width:14.6px;height:14.6px;"><use href="#lock"/></svg><svg class="i" style="left:412.90px;top:850.60px;width:12.2px;height:12.2px;"><use href="#min"/></svg><svg class="i" style="left:431.25px;top:849.35px;width:14.3px;height:14.3px;"><use href="#xl"/></svg><div style="left:203.90px;top:867.30px;width:63.80px;height:12.60px;background:radial-gradient(ellipse at center,#585858 0%,#3f3f3f 100%);border-radius:2px;"></div><div class="t" style="top:863.80px;height:20px;line-height:20px;font-size:9.6px;color:#e0e0e0;letter-spacing:0.191px;left:204.00px;width:63.80px;text-align:center;">Lock All</div><div style="left:278.20px;top:867.30px;width:64.00px;height:12.60px;background:radial-gradient(ellipse at center,#585858 0%,#3f3f3f 100%);border-radius:2px;"></div><div class="t" style="top:863.80px;height:20px;line-height:20px;font-size:9.6px;color:#e0e0e0;letter-spacing:0.208px;left:278.30px;width:64.00px;text-align:center;">Unlock All</div><div style="left:321.80px;top:894.40px;width:7.00px;height:7.00px;background:#8c8c8c;border-radius:4px;"></div><div style="left:200.90px;top:908.60px;width:249.30px;height:126.40px;background:#242424;border-radius:3px;border:1.1px solid #494949;box-sizing:border-box;"></div><svg class="i" style="left:205.05px;top:912.55px;width:14.5px;height:14.5px;"><use href="#pw"/></svg><div class="t" style="top:909.40px;height:20px;line-height:20px;font-size:13.3px;color:#e8e8e8;letter-spacing:0.264px;left:228.00px;">Mapping</div><svg class="i" style="left:374.50px;top:913.60px;width:12.6px;height:12.6px;"><use href="#cbw"/></svg><svg class="i" style="left:392.70px;top:912.10px;width:14.6px;height:14.6px;"><use href="#lock"/></svg><svg class="i" style="left:412.90px;top:914.00px;width:12.2px;height:12.2px;"><use href="#min"/></svg><svg class="i" style="left:431.25px;top:912.75px;width:14.3px;height:14.3px;"><use href="#xl"/></svg><div class="t" style="top:950.40px;height:20px;line-height:20px;font-size:11.3px;color:#e6e6e6;letter-spacing:0.441px;left:210.00px;">Arm</div><svg class="i" style="left:423.00px;top:951.10px;width:17.6px;height:17.6px;"><use href="#cbon"/></svg><svg class="i" style="left:211.45px;top:978.55px;width:13.5px;height:13.5px;"><use href="#pwg"/></svg><div class="t" style="top:975.00px;height:20px;line-height:20px;font-size:13.4px;color:#f0f0f0;font-weight:700;letter-spacing:-0.335px;left:229.40px;">Range</div><svg class="i" style="left:337.40px;top:981.40px;width:8.00px;height:8.00px;" viewBox="0 0 8.00 8.00"><path d="M0.6 0.6 L7 4 L0.6 7.4 Z" fill="#4a4a4a"/></svg><div style="left:351.30px;top:977.50px;width:39.20px;height:16.00px;background:#1d1d1d;"></div><div class="t" style="top:975.80px;height:20px;line-height:20px;font-size:11.4px;color:#5c5c5c;letter-spacing:-0.054px;left:350.87px;width:40.00px;text-align:center;">0.000</div><div style="left:401.10px;top:977.50px;width:39.20px;height:16.00px;background:#1d1d1d;"></div><div class="t" style="top:975.80px;height:20px;line-height:20px;font-size:11.4px;color:#5c5c5c;letter-spacing:-0.154px;left:400.62px;width:40.00px;text-align:center;">1.000</div><div class="t" style="top:1000.60px;height:20px;line-height:20px;font-size:13.3px;color:#e8e8e8;letter-spacing:-0.12px;left:210.00px;">Range Remap Mode</div><div style="left:334.00px;top:1003.00px;width:106.30px;height:16.00px;background:linear-gradient(#dedede,#cdcdcd);border-radius:1px;"></div><div class="t" style="top:1000.80px;height:20px;line-height:20px;font-size:13.3px;color:#111;letter-spacing:0.007px;left:340.20px;">Absolute</div><svg class="i" style="left:431.00px;top:1008.60px;width:6.00px;height:5.00px;" viewBox="0 0 6.00 5.00"><path d="M0.4 0.6 H5.2 L2.8 4 Z" fill="#333"/></svg><div style="left:321.60px;top:1024.60px;width:7.00px;height:7.00px;background:#8c8c8c;border-radius:4px;"></div><div style="left:465.20px;top:900.00px;width:1.40px;height:104.00px;background:#3c3c3c;"></div><div style="left:474.00px;top:757.20px;width:1051.00px;height:16.20px;background:#2f4b63;border-radius:1px;border:1.3px solid #6fb8e4;box-sizing:border-box;"></div><svg class="i" style="left:474.00px;top:776.00px;width:1051.00px;height:37.00px;" viewBox="0 0 1051.00 37.00"><rect x="0" y="0" width="1050.4" height="17.4" fill="#3a3a3a"/><rect x="0" y="17.4" width="1050.4" height="19.6" fill="#1a1a1a"/><rect x="0.4" y="0.8" width="20.2" height="13" rx="1.5" fill="#8c8c8c"/><path d="M35.03 17.4 V37" stroke="#444" stroke-width="0.9"/><path d="M70.07 17.4 V37" stroke="#444" stroke-width="0.9"/><path d="M105.10 17.4 V37" stroke="#444" stroke-width="0.9"/><path d="M140.13 17.4 V37" stroke="#444" stroke-width="0.9"/><path d="M175.17 17.4 V37" stroke="#444" stroke-width="0.9"/><path d="M210.20 17.4 V37" stroke="#444" stroke-width="0.9"/><path d="M245.23 17.4 V37" stroke="#444" stroke-width="0.9"/><path d="M280.27 17.4 V37" stroke="#444" stroke-width="0.9"/><path d="M315.30 17.4 V37" stroke="#444" stroke-width="0.9"/><path d="M350.33 17.4 V37" stroke="#444" stroke-width="0.9"/><path d="M385.37 17.4 V37" stroke="#444" stroke-width="0.9"/><path d="M420.40 17.4 V37" stroke="#444" stroke-width="0.9"/><path d="M455.43 17.4 V37" stroke="#444" stroke-width="0.9"/><path d="M490.47 17.4 V37" stroke="#444" stroke-width="0.9"/><path d="M525.50 17.4 V37" stroke="#444" stroke-width="0.9"/><path d="M560.53 17.4 V37" stroke="#444" stroke-width="0.9"/><path d="M595.57 17.4 V37" stroke="#444" stroke-width="0.9"/><path d="M630.60 17.4 V37" stroke="#444" stroke-width="0.9"/><path d="M665.63 17.4 V37" stroke="#444" stroke-width="0.9"/><path d="M700.67 17.4 V37" stroke="#444" stroke-width="0.9"/><path d="M735.70 17.4 V37" stroke="#444" stroke-width="0.9"/><path d="M770.73 17.4 V37" stroke="#444" stroke-width="0.9"/><path d="M805.77 17.4 V37" stroke="#444" stroke-width="0.9"/><path d="M840.80 17.4 V37" stroke="#444" stroke-width="0.9"/><path d="M875.83 17.4 V37" stroke="#444" stroke-width="0.9"/><path d="M910.87 17.4 V37" stroke="#444" stroke-width="0.9"/><path d="M945.90 17.4 V37" stroke="#444" stroke-width="0.9"/><path d="M980.93 17.4 V37" stroke="#444" stroke-width="0.9"/><path d="M1015.97 17.4 V37" stroke="#444" stroke-width="0.9"/></svg><div class="t" style="top:775.40px;height:20px;line-height:20px;font-size:11.2px;color:#1c1c1c;left:472.60px;width:24.00px;text-align:center;">0'</div><div class="t" style="top:775.40px;height:20px;line-height:20px;font-size:11.2px;color:#737373;letter-spacing:0.3px;left:492.83px;width:30.00px;text-align:center;">1</div><div class="t" style="top:775.40px;height:20px;line-height:20px;font-size:11.2px;color:#737373;letter-spacing:0.3px;left:527.87px;width:30.00px;text-align:center;">2</div><div class="t" style="top:775.40px;height:20px;line-height:20px;font-size:11.2px;color:#737373;letter-spacing:0.3px;left:562.90px;width:30.00px;text-align:center;">3</div><div class="t" style="top:775.40px;height:20px;line-height:20px;font-size:11.2px;color:#737373;letter-spacing:0.3px;left:597.93px;width:30.00px;text-align:center;">4</div><div class="t" style="top:775.40px;height:20px;line-height:20px;font-size:11.2px;color:#737373;letter-spacing:0.3px;left:632.97px;width:30.00px;text-align:center;">5</div><div class="t" style="top:775.40px;height:20px;line-height:20px;font-size:11.2px;color:#737373;letter-spacing:0.3px;left:668.00px;width:30.00px;text-align:center;">6</div><div class="t" style="top:775.40px;height:20px;line-height:20px;font-size:11.2px;color:#737373;letter-spacing:0.3px;left:703.03px;width:30.00px;text-align:center;">7</div><div class="t" style="top:775.40px;height:20px;line-height:20px;font-size:11.2px;color:#737373;letter-spacing:0.3px;left:738.07px;width:30.00px;text-align:center;">8</div><div class="t" style="top:775.40px;height:20px;line-height:20px;font-size:11.2px;color:#737373;letter-spacing:0.3px;left:773.10px;width:30.00px;text-align:center;">9</div><div class="t" style="top:775.40px;height:20px;line-height:20px;font-size:11.2px;color:#737373;letter-spacing:0.3px;left:808.13px;width:30.00px;text-align:center;">10</div><div class="t" style="top:775.40px;height:20px;line-height:20px;font-size:11.2px;color:#737373;letter-spacing:0.3px;left:843.17px;width:30.00px;text-align:center;">11</div><div class="t" style="top:775.40px;height:20px;line-height:20px;font-size:11.2px;color:#737373;letter-spacing:0.3px;left:878.20px;width:30.00px;text-align:center;">12</div><div class="t" style="top:775.40px;height:20px;line-height:20px;font-size:11.2px;color:#737373;letter-spacing:0.3px;left:913.23px;width:30.00px;text-align:center;">13</div><div class="t" style="top:775.40px;height:20px;line-height:20px;font-size:11.2px;color:#737373;letter-spacing:0.3px;left:948.27px;width:30.00px;text-align:center;">14</div><div class="t" style="top:775.40px;height:20px;line-height:20px;font-size:11.2px;color:#737373;letter-spacing:0.3px;left:983.30px;width:30.00px;text-align:center;">15</div><div class="t" style="top:775.40px;height:20px;line-height:20px;font-size:11.2px;color:#737373;letter-spacing:0.3px;left:1018.33px;width:30.00px;text-align:center;">16</div><div class="t" style="top:775.40px;height:20px;line-height:20px;font-size:11.2px;color:#737373;letter-spacing:0.3px;left:1053.37px;width:30.00px;text-align:center;">17</div><div class="t" style="top:775.40px;height:20px;line-height:20px;font-size:11.2px;color:#737373;letter-spacing:0.3px;left:1088.40px;width:30.00px;text-align:center;">18</div><div class="t" style="top:775.40px;height:20px;line-height:20px;font-size:11.2px;color:#737373;letter-spacing:0.3px;left:1123.43px;width:30.00px;text-align:center;">19</div><div class="t" style="top:775.40px;height:20px;line-height:20px;font-size:11.2px;color:#737373;letter-spacing:0.3px;left:1158.47px;width:30.00px;text-align:center;">20</div><div class="t" style="top:775.40px;height:20px;line-height:20px;font-size:11.2px;color:#737373;letter-spacing:0.3px;left:1193.50px;width:30.00px;text-align:center;">21</div><div class="t" style="top:775.40px;height:20px;line-height:20px;font-size:11.2px;color:#737373;letter-spacing:0.3px;left:1228.53px;width:30.00px;text-align:center;">22</div><div class="t" style="top:775.40px;height:20px;line-height:20px;font-size:11.2px;color:#737373;letter-spacing:0.3px;left:1263.57px;width:30.00px;text-align:center;">23</div><div class="t" style="top:775.40px;height:20px;line-height:20px;font-size:11.2px;color:#737373;letter-spacing:0.3px;left:1298.60px;width:30.00px;text-align:center;">24</div><div class="t" style="top:775.40px;height:20px;line-height:20px;font-size:11.2px;color:#737373;letter-spacing:0.3px;left:1333.63px;width:30.00px;text-align:center;">25</div><div class="t" style="top:775.40px;height:20px;line-height:20px;font-size:11.2px;color:#737373;letter-spacing:0.3px;left:1368.67px;width:30.00px;text-align:center;">26</div><div class="t" style="top:775.40px;height:20px;line-height:20px;font-size:11.2px;color:#737373;letter-spacing:0.3px;left:1403.70px;width:30.00px;text-align:center;">27</div><div class="t" style="top:775.40px;height:20px;line-height:20px;font-size:11.2px;color:#737373;letter-spacing:0.3px;left:1438.73px;width:30.00px;text-align:center;">28</div><div class="t" style="top:775.40px;height:20px;line-height:20px;font-size:11.2px;color:#737373;letter-spacing:0.3px;left:1473.77px;width:30.00px;text-align:center;">29</div><svg class="i" style="left:1521.40px;top:775.60px;width:4.00px;height:4.00px;" viewBox="0 0 4.00 4.00"><path d="M0.4 0.4 H3.6 V3.6 Z" fill="#e8943a"/></svg><svg class="i" style="left:1521.40px;top:808.80px;width:4.00px;height:4.00px;" viewBox="0 0 4.00 4.00"><path d="M0.4 3.6 H3.6 V0.4 Z" fill="#e8943a"/></svg><div style="left:474.00px;top:845.00px;width:1049.20px;height:60.80px;background:#333333;border-radius:4px;"></div><div style="left:554.00px;top:845.00px;width:1.15px;height:60.80px;background:#a6a6a6;"></div><div style="left:774.40px;top:845.00px;width:1.15px;height:60.80px;background:#a6a6a6;"></div><div style="left:1255.40px;top:845.00px;width:1.15px;height:60.80px;background:#a6a6a6;"></div><div style="left:554.50px;top:868.30px;width:51.20px;height:21.20px;background:#444;border:1px solid #8a8a8a;box-sizing:border-box;"></div><div class="t" style="top:868.80px;height:20px;line-height:20px;font-size:13.3px;color:#ececec;letter-spacing:0.3px;left:561.00px;">Clip 1</div><div style="left:775.20px;top:865.40px;width:60.80px;height:20.60px;background:#444;border:1px solid #8a8a8a;box-sizing:border-box;"></div><div class="t" style="top:865.40px;height:20px;line-height:20px;font-size:13.3px;color:#ececec;letter-spacing:0.496px;left:782.00px;">Trigger</div><div style="left:474.00px;top:908.20px;width:1049.20px;height:127.60px;background:#2a2a2a;border-radius:3px;"></div><div style="left:474.00px;top:1000.60px;width:1049.20px;height:35.20px;background:#323232;border-radius:0 0 3px 3px;"></div><svg class="i" style="left:474.00px;top:908.20px;width:1049.20px;height:127.60px;overflow:hidden;" viewBox="0 0 1049.20 127.60"><path d="M32 102.40 H1049.2" stroke="#353535" stroke-width="1"/><path d="M32 76.10 H1049.2" stroke="#353535" stroke-width="1"/><path d="M32 49.80 H1049.2" stroke="#353535" stroke-width="1"/><path d="M32 23.50 H1049.2" stroke="#353535" stroke-width="1"/><path d="M0 0.6 H1049.2" stroke="#3d3d3d" stroke-width="1"/><path d="M3.0 92.3 L92.0 92.3" stroke="#8a8a8a" stroke-width="1" stroke-dasharray="5.5 5.5"/><path d="M818.0 73.2 L1049.0 73.2" stroke="#8a8a8a" stroke-width="1" stroke-dasharray="5.5 5.5"/><path d="M95.2 92.3 C146.0 91.8 151.0 22.8 201.3 22.8 C271.0 22.8 406.0 102.8 490.2 102.8 C526.0 96.8 601.0 16.8 646.8 7.1 C726.0 12.8 803.0 41.8 809.3 73.2" fill="none" stroke="#7a7a7a" stroke-width="1.1"/><path d="M140.2 22.8 L284.6 22.8" stroke="#d8d8d8" stroke-width="1"/><circle cx="140.2" cy="22.8" r="2" fill="#d8d8d8"/><circle cx="284.6" cy="22.8" r="2" fill="#d8d8d8"/><circle cx="95.2" cy="92.3" r="4.2" fill="#6c6c6c"/><circle cx="490.2" cy="102.8" r="4.2" fill="#6c6c6c"/><circle cx="646.8" cy="7.1" r="4.2" fill="#6c6c6c"/><circle cx="809.3" cy="73.2" r="4.2" fill="#6c6c6c"/><circle cx="201.3" cy="22.8" r="4.2" fill="#f0a83a" stroke="#e0642a" stroke-width="1.2"/><path d="M0 89.3 L3.6 92.3 L0 95.3 Z" fill="#5ab0e6"/></svg><div class="t" style="top:919.10px;height:20px;line-height:20px;font-size:10.6px;color:#4f4f4f;letter-spacing:0.3px;left:476.00px;">0.80</div><div class="t" style="top:945.40px;height:20px;line-height:20px;font-size:10.6px;color:#4f4f4f;letter-spacing:0.3px;left:476.00px;">0.60</div><div class="t" style="top:971.70px;height:20px;line-height:20px;font-size:10.6px;color:#4f4f4f;letter-spacing:0.3px;left:476.00px;">0.40</div><div class="t" style="top:998.00px;height:20px;line-height:20px;font-size:10.6px;color:#4f4f4f;letter-spacing:0.3px;left:476.00px;">0.20</div><div style="left:474.00px;top:1024.00px;width:40.00px;height:11.80px;overflow:hidden;"><div class="t" style="top:0.30px;height:20px;line-height:20px;font-size:10.6px;color:#484848;letter-spacing:0.3px;left:2.00px;">0.00</div></div><div class="t" style="top:905.95px;height:20px;line-height:20px;font-size:10.6px;color:#303030;letter-spacing:0.3px;left:476.00px;">0.90</div><div class="t" style="top:932.25px;height:20px;line-height:20px;font-size:10.6px;color:#303030;letter-spacing:0.3px;left:476.00px;">0.70</div><div class="t" style="top:958.55px;height:20px;line-height:20px;font-size:10.6px;color:#303030;letter-spacing:0.3px;left:476.00px;">0.50</div><div class="t" style="top:984.85px;height:20px;line-height:20px;font-size:10.6px;color:#303030;letter-spacing:0.3px;left:476.00px;">0.30</div><div class="t" style="top:1011.15px;height:20px;line-height:20px;font-size:10.6px;color:#393939;letter-spacing:0.3px;left:476.00px;">0.10</div><div style="left:1537.20px;top:887.00px;width:1.40px;height:62.00px;background:#3a3a3a;"></div>
<div style="left:1541.60px;top:727.30px;width:506.40px;height:424.70px;background:#222222;"></div><div style="left:1541.60px;top:727.30px;width:506.40px;height:25.50px;background:#383838;"></div><div style="left:1541.60px;top:727.30px;width:67.80px;height:25.50px;background:#3b3b3b;box-shadow:inset -1px 0 0 #333;"></div><div class="t" style="top:730.50px;height:20px;line-height:20px;font-size:13.3px;color:#e2e2e2;letter-spacing:-0.02px;left:1549.50px;">Help</div><svg class="i" style="left:1588.70px;top:731.95px;width:15.8px;height:15.8px;"><use href="#x"/></svg><div style="left:1609.40px;top:727.30px;width:81.20px;height:25.50px;background:#222222;"></div><div class="t" style="top:730.50px;height:20px;line-height:20px;font-size:13.3px;color:#e2e2e2;letter-spacing:0.059px;left:1616.50px;">Logger</div><svg class="i" style="left:1670.10px;top:731.95px;width:15.8px;height:15.8px;"><use href="#x"/></svg><div style="left:1690.60px;top:727.30px;width:94.40px;height:25.50px;background:#3b3b3b;box-shadow:inset -1px 0 0 #333;"></div><div class="t" style="top:730.50px;height:20px;line-height:20px;font-size:13.3px;color:#e2e2e2;letter-spacing:0.104px;left:1697.20px;">Warnings</div><svg class="i" style="left:1765.70px;top:731.95px;width:15.8px;height:15.8px;"><use href="#x"/></svg><div style="left:1544.40px;top:760.40px;width:59.60px;height:17.00px;background:#555555;border-radius:3px;"></div><div class="t" style="top:759.00px;height:20px;line-height:20px;font-size:9.6px;color:#f2f2f2;font-weight:700;letter-spacing:0.15px;left:1547.00px;">Time</div><div style="left:1608.40px;top:760.40px;width:81.20px;height:17.00px;background:#555555;border-radius:3px;"></div><div class="t" style="top:759.00px;height:20px;line-height:20px;font-size:9.6px;color:#f2f2f2;font-weight:700;letter-spacing:0.15px;left:1611.00px;">Source</div><div style="left:1693.60px;top:760.40px;width:341.40px;height:17.00px;background:#555555;border-radius:3px;"></div><div class="t" style="top:759.00px;height:20px;line-height:20px;font-size:9.6px;color:#f2f2f2;font-weight:700;letter-spacing:0.15px;left:1696.20px;">Content</div><div style="left:1542.00px;top:779.90px;width:495.20px;height:339.90px;overflow:hidden;"><div style="left:0.00px;top:-6.73px;width:495.60px;height:13.96px;background:#323232;"></div><div class="t" style="top:-9.60px;height:20px;line-height:20px;font-size:11px;color:#bababa;letter-spacing:-0.139px;left:1.20px;">10:08:13.468</div><div class="t" style="top:-9.60px;height:20px;line-height:20px;font-size:11px;color:#bababa;letter-spacing:0.067px;left:64.60px;">Engine</div><div class="t" style="top:-9.60px;height:20px;line-height:20px;font-size:11px;color:#bababa;letter-spacing:0.533px;left:149.90px;">Session loaded in -6.75346e+13s</div><div style="left:0.00px;top:7.13px;width:495.60px;height:13.96px;background:#3a3a3a;"></div><div class="t" style="top:4.26px;height:20px;line-height:20px;font-size:11px;color:#bababa;letter-spacing:-0.139px;left:1.20px;">10:08:13.527</div><div class="t" style="top:4.26px;height:20px;line-height:20px;font-size:11px;color:#bababa;letter-spacing:0.42px;left:64.60px;">AppUpdater</div><div class="t" style="top:4.26px;height:20px;line-height:20px;font-size:11px;color:#bababa;letter-spacing:0.417px;left:149.90px;">App is up to date :) (Latest version online : 1.9.0)</div><div style="left:0.00px;top:20.98px;width:495.60px;height:13.96px;background:#323232;"></div><div class="t" style="top:18.11px;height:20px;line-height:20px;font-size:11px;color:#bababa;letter-spacing:-0.139px;left:1.20px;">10:08:15.507</div><div class="t" style="top:18.11px;height:20px;line-height:20px;font-size:11px;color:#bababa;left:64.60px;transform:scaleX(0.869);transform-origin:0 50%;">DashboardManager</div><div class="t" style="top:18.11px;height:20px;line-height:20px;font-size:11px;color:#bababa;left:149.90px;transform:scaleX(0.773);transform-origin:0 50%;">Dashboard downloaded. Extracting to /Users/heberconcepts/Documents/Chataigne/dash…</div><div style="left:0.00px;top:34.84px;width:495.60px;height:13.96px;background:#3a3a3a;"></div><div class="t" style="top:31.97px;height:20px;line-height:20px;font-size:11px;color:#bababa;letter-spacing:-0.139px;left:1.20px;">10:08:15.525</div><div class="t" style="top:31.97px;height:20px;line-height:20px;font-size:11px;color:#bababa;left:64.60px;transform:scaleX(0.869);transform-origin:0 50%;">DashboardManager</div><div class="t" style="top:31.97px;height:20px;line-height:20px;font-size:11px;color:#bababa;letter-spacing:0.468px;left:149.90px;">You got a new dashboard my friend !</div><div style="left:0.00px;top:48.70px;width:495.60px;height:13.96px;background:#323232;"></div><div class="t" style="top:45.82px;height:20px;line-height:20px;font-size:11px;color:#bababa;letter-spacing:-0.139px;left:1.20px;">23:49:30.490</div><div class="t" style="top:45.82px;height:20px;line-height:20px;font-size:11px;color:#bababa;letter-spacing:0.198px;left:64.60px;">OSC Output</div><div class="t" style="top:45.82px;height:20px;line-height:20px;font-size:11px;color:#bababa;letter-spacing:0.551px;left:149.90px;">Now sending to 127.0.0.1:9000</div><div style="left:0.00px;top:62.55px;width:495.60px;height:13.96px;background:#3a3a3a;"></div><div class="t" style="top:59.68px;height:20px;line-height:20px;font-size:11px;color:#bababa;letter-spacing:-0.139px;left:1.20px;">23:49:30.495</div><div class="t" style="top:59.68px;height:20px;line-height:20px;font-size:11px;color:#bababa;letter-spacing:0.198px;left:64.60px;">OSC Output</div><div class="t" style="top:59.68px;height:20px;line-height:20px;font-size:11px;color:#bababa;letter-spacing:0.551px;left:149.90px;">Now sending to 127.0.0.1:8000</div><div style="left:0.00px;top:76.41px;width:495.60px;height:13.96px;background:#323232;"></div><div class="t" style="top:73.54px;height:20px;line-height:20px;font-size:11px;color:#bababa;letter-spacing:-0.139px;left:1.20px;">23:49:30.498</div><div class="t" style="top:73.54px;height:20px;line-height:20px;font-size:11px;color:#bababa;letter-spacing:0.198px;left:64.60px;">OSC Output</div><div class="t" style="top:73.54px;height:20px;line-height:20px;font-size:11px;color:#bababa;letter-spacing:0.551px;left:149.90px;">Now sending to 127.0.0.1:8000</div><div style="left:0.00px;top:90.26px;width:495.60px;height:13.96px;background:#3a3a3a;"></div><div class="t" style="top:87.39px;height:20px;line-height:20px;font-size:11px;color:#bababa;letter-spacing:-0.139px;left:1.20px;">23:49:33.908</div><div class="t" style="top:87.39px;height:20px;line-height:20px;font-size:11px;color:#bababa;letter-spacing:0.198px;left:64.60px;">OSC Output</div><div class="t" style="top:87.39px;height:20px;line-height:20px;font-size:11px;color:#bababa;letter-spacing:0.551px;left:149.90px;">Now sending to 127.0.0.1:9000</div><div style="left:0.00px;top:104.12px;width:495.60px;height:13.96px;background:#323232;"></div><div class="t" style="top:101.25px;height:20px;line-height:20px;font-size:11px;color:#bababa;letter-spacing:-0.139px;left:1.20px;">23:49:33.912</div><div class="t" style="top:101.25px;height:20px;line-height:20px;font-size:11px;color:#bababa;letter-spacing:0.198px;left:64.60px;">OSC Output</div><div class="t" style="top:101.25px;height:20px;line-height:20px;font-size:11px;color:#bababa;letter-spacing:0.551px;left:149.90px;">Now sending to 127.0.0.1:7000</div><div style="left:0.00px;top:117.98px;width:495.60px;height:13.96px;background:#3a3a3a;"></div><div class="t" style="top:115.10px;height:20px;line-height:20px;font-size:11px;color:#bababa;letter-spacing:-0.139px;left:1.20px;">23:49:33.914</div><div class="t" style="top:115.10px;height:20px;line-height:20px;font-size:11px;color:#bababa;letter-spacing:0.198px;left:64.60px;">OSC Output</div><div class="t" style="top:115.10px;height:20px;line-height:20px;font-size:11px;color:#bababa;letter-spacing:0.551px;left:149.90px;">Now sending to 127.0.0.1:7000</div><div style="left:0.00px;top:131.83px;width:495.60px;height:13.96px;background:#6b120e;"></div><div class="t" style="top:128.96px;height:20px;line-height:20px;font-size:11px;color:#f0453a;letter-spacing:-0.139px;left:1.20px;">23:49:37.605</div><div class="t" style="top:128.96px;height:20px;line-height:20px;font-size:11px;color:#f0453a;letter-spacing:0.363px;left:64.60px;">Watchout</div><div class="t" style="top:128.96px;height:20px;line-height:20px;font-size:11px;color:#f0453a;letter-spacing:0.548px;left:149.90px;">Could not connect to 127.0.0.1:3040</div><div style="left:0.00px;top:145.69px;width:495.60px;height:13.96px;background:#3a3a3a;"></div><div class="t" style="top:142.82px;height:20px;line-height:20px;font-size:11px;color:#bababa;letter-spacing:-0.139px;left:1.20px;">23:49:44.337</div><div class="t" style="top:142.82px;height:20px;line-height:20px;font-size:11px;color:#bababa;letter-spacing:0.126px;left:64.60px;">PowerPoint</div><div class="t" style="top:142.82px;height:20px;line-height:20px;font-size:11px;color:#bababa;letter-spacing:0.498px;left:149.90px;">Now receiving on port : 35551</div><div style="left:0.00px;top:159.54px;width:495.60px;height:13.96px;background:#323232;"></div><div class="t" style="top:156.67px;height:20px;line-height:20px;font-size:11px;color:#bababa;letter-spacing:-0.139px;left:1.20px;">23:49:44.337</div><div class="t" style="top:156.67px;height:20px;line-height:20px;font-size:11px;color:#bababa;letter-spacing:0.126px;left:64.60px;">PowerPoint</div><div class="t" style="top:156.67px;height:20px;line-height:20px;font-size:11px;color:#bababa;letter-spacing:-0.035px;left:149.90px;">Local IPs:</div><div style="left:0.00px;top:173.40px;width:495.60px;height:13.96px;background:#3a3a3a;"></div><div class="t" style="top:170.53px;height:20px;line-height:20px;font-size:11px;color:#bababa;letter-spacing:0.802px;left:149.90px;">&gt; 10.211.55.2</div><div style="left:0.00px;top:187.26px;width:495.60px;height:13.96px;background:#323232;"></div><div class="t" style="top:184.38px;height:20px;line-height:20px;font-size:11px;color:#bababa;letter-spacing:0.734px;left:149.90px;">&gt; 10.37.129.2</div><div style="left:0.00px;top:201.11px;width:495.60px;height:13.96px;background:#3a3a3a;"></div><div class="t" style="top:198.24px;height:20px;line-height:20px;font-size:11px;color:#bababa;letter-spacing:0.714px;left:149.90px;">&gt; 127.0.0.1</div><div style="left:0.00px;top:214.97px;width:495.60px;height:13.96px;background:#323232;"></div><div class="t" style="top:212.10px;height:20px;line-height:20px;font-size:11px;color:#bababa;letter-spacing:0.743px;left:149.90px;">&gt; 192.168.178.53</div><div style="left:0.00px;top:228.82px;width:495.60px;height:13.96px;background:#3a3a3a;"></div><div class="t" style="top:225.95px;height:20px;line-height:20px;font-size:11px;color:#bababa;letter-spacing:0.763px;left:149.90px;">&gt; 192.168.178.60</div><div style="left:0.00px;top:242.68px;width:495.60px;height:13.96px;background:#323232;"></div><div class="t" style="top:239.81px;height:20px;line-height:20px;font-size:11px;color:#bababa;letter-spacing:-0.139px;left:1.20px;">23:49:44.341</div><div class="t" style="top:239.81px;height:20px;line-height:20px;font-size:11px;color:#bababa;letter-spacing:0.198px;left:64.60px;">OSC Output</div><div class="t" style="top:239.81px;height:20px;line-height:20px;font-size:11px;color:#bababa;letter-spacing:0.551px;left:149.90px;">Now sending to 127.0.0.1:9000</div><div style="left:0.00px;top:256.54px;width:495.60px;height:13.96px;background:#3a3a3a;"></div><div class="t" style="top:253.66px;height:20px;line-height:20px;font-size:11px;color:#bababa;letter-spacing:-0.139px;left:1.20px;">23:49:44.346</div><div class="t" style="top:253.66px;height:20px;line-height:20px;font-size:11px;color:#bababa;letter-spacing:0.198px;left:64.60px;">OSC Output</div><div class="t" style="top:253.66px;height:20px;line-height:20px;font-size:11px;color:#bababa;letter-spacing:0.565px;left:149.90px;">Now sending to 127.0.0.1:35550</div><div style="left:0.00px;top:270.39px;width:495.60px;height:13.96px;background:#323232;"></div><div class="t" style="top:267.52px;height:20px;line-height:20px;font-size:11px;color:#bababa;letter-spacing:-0.139px;left:1.20px;">23:49:44.348</div><div class="t" style="top:267.52px;height:20px;line-height:20px;font-size:11px;color:#bababa;letter-spacing:0.198px;left:64.60px;">OSC Output</div><div class="t" style="top:267.52px;height:20px;line-height:20px;font-size:11px;color:#bababa;letter-spacing:0.565px;left:149.90px;">Now sending to 127.0.0.1:35550</div><div style="left:0.00px;top:284.25px;width:495.60px;height:13.96px;background:#3a3a3a;"></div><div class="t" style="top:281.38px;height:20px;line-height:20px;font-size:11px;color:#bababa;letter-spacing:-0.139px;left:1.20px;">23:49:45.476</div><div class="t" style="top:281.38px;height:20px;line-height:20px;font-size:11px;color:#bababa;letter-spacing:0.126px;left:64.60px;">PowerPoint</div><div class="t" style="top:281.38px;height:20px;line-height:20px;font-size:11px;color:#bababa;letter-spacing:0.335px;left:149.90px;">Zeroconf service created : PowerPoint:35551</div><div style="left:0.00px;top:298.10px;width:495.60px;height:13.96px;background:#323232;"></div><div class="t" style="top:295.23px;height:20px;line-height:20px;font-size:11px;color:#bababa;letter-spacing:-0.139px;left:1.20px;">23:49:45.731</div><div class="t" style="top:295.23px;height:20px;line-height:20px;font-size:11px;color:#bababa;letter-spacing:0.44px;left:64.60px;">Zeroconf</div><div class="t" style="top:295.23px;height:20px;line-height:20px;font-size:11px;color:#bababa;left:149.90px;transform:scaleX(0.7434);transform-origin:0 50%;">New OSC service discovered : Chataigne - PowerPoint on HEBERs-iMac.local, 127.0.0.1:35…</div><div style="left:0.00px;top:311.96px;width:495.60px;height:13.96px;background:#3a3a3a;"></div><div class="t" style="top:309.09px;height:20px;line-height:20px;font-size:11px;color:#bababa;letter-spacing:-0.139px;left:1.20px;">23:49:52.277</div><div class="t" style="top:309.09px;height:20px;line-height:20px;font-size:11px;color:#bababa;letter-spacing:0.363px;left:64.60px;">Watchout</div><div class="t" style="top:309.09px;height:20px;line-height:20px;font-size:11px;color:#bababa;letter-spacing:0.42px;left:149.90px;">Module is disabled, closing connections</div><div style="left:0.00px;top:325.82px;width:495.60px;height:13.96px;background:#323232;"></div><div class="t" style="top:322.94px;height:20px;line-height:20px;font-size:11px;color:#bababa;letter-spacing:0.458px;left:1.20px;">0:03:23.814</div><div class="t" style="top:322.94px;height:20px;line-height:20px;font-size:11px;color:#bababa;left:64.60px;transform:scaleX(0.7599);transform-origin:0 50%;">OrganicMainCompo…</div><div class="t" style="top:322.94px;height:20px;line-height:20px;font-size:11px;color:#bababa;letter-spacing:0.12px;left:149.90px;">File saved.</div></div><div style="left:2037.20px;top:779.90px;width:10.80px;height:339.90px;background:#353535;"></div><svg class="i" style="left:2037.00px;top:780.00px;width:11.00px;height:340.00px;" viewBox="0 0 11.00 340.00"><path d="M2.2 8.2 L5.7 3.3 L9.2 8.2 Z" fill="#8e8e8e"/><rect x="2.9" y="14.8" width="6" height="312.2" rx="3" fill="#4c4c4c"/><rect x="2.9" y="51" width="6" height="276" rx="3" fill="#767676"/><path d="M2 331.2 L9.4 331.2 L5.7 336.6 Z" fill="#7c7c7c"/></svg><div style="left:1538.20px;top:925.00px;width:1.40px;height:66.00px;background:#3a3a3a;"></div><div style="left:1550.20px;top:1127.80px;width:210.40px;height:16.00px;background:#565656;border-radius:3px;"></div><div class="t" style="top:1126.00px;height:20px;line-height:20px;font-size:9.4px;color:#e4e4e4;letter-spacing:0.3px;left:1550.20px;width:210.40px;text-align:center;">Clear</div><div style="left:1765.60px;top:1127.80px;width:210.40px;height:16.00px;background:#565656;border-radius:3px;"></div><div class="t" style="top:1126.00px;height:20px;line-height:20px;font-size:9.4px;color:#e4e4e4;letter-spacing:0.3px;left:1765.60px;width:210.40px;text-align:center;">Copy All</div><div style="left:1981.00px;top:1127.80px;width:59.00px;height:16.00px;background:#565656;border-radius:3px;"></div><div class="t" style="top:1126.00px;height:20px;line-height:20px;font-size:9.4px;color:#e4e4e4;letter-spacing:0.3px;left:1981.00px;width:59.00px;text-align:center;">Auto Scroll</div></div></body></html>
